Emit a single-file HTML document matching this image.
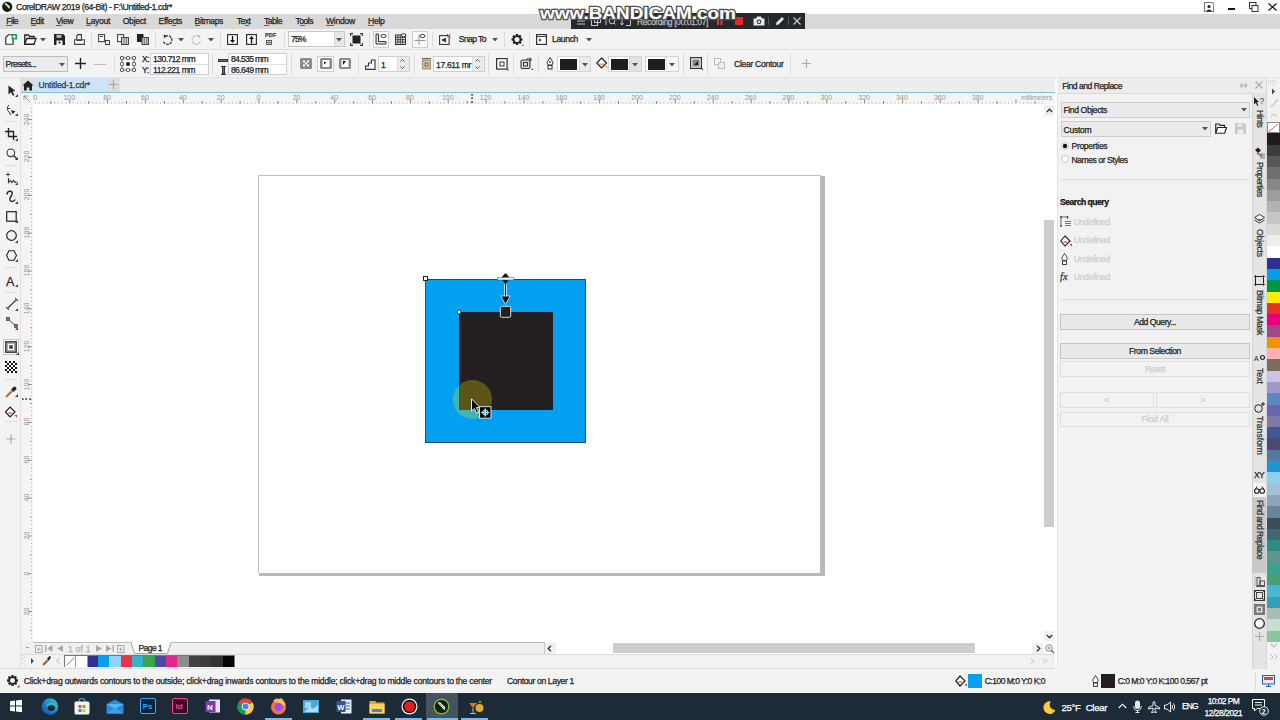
<!DOCTYPE html>
<html><head><meta charset="utf-8">
<style>
*{margin:0;padding:0;box-sizing:border-box}
html,body{width:1280px;height:720px;overflow:hidden;background:#f2f2f2;font-family:"Liberation Sans",sans-serif;color:#222;position:relative}
.a{position:absolute}
.t{position:absolute;white-space:nowrap;line-height:1;-webkit-text-stroke:0.25px currentColor}
svg{overflow:visible}
</style></head><body>

<div class="a" style="left:0px;top:0px;width:1280px;height:14px;background:#ffffff;"></div>
<svg class="a" style="left:2px;top:1px;" width="12" height="12" viewBox="0 0 12 12"><circle cx="5.2" cy="5.8" r="5.1" fill="#0d1f08"/><path d="M2.2 2.6 L4.2 1.9 L8 5.6 L7.4 7.9 Z" fill="#e8f2e0"/><path d="M3.4 2.8 L7 6.2" stroke="#7a9a70" stroke-width="0.6"/></svg>
<div class="t" style="left:16px;top:2.95px;font-size:8.8px;color:#1a1a1a;letter-spacing:-0.426px;">CorelDRAW 2019 (64-Bit) - F:\Untitled-1.cdr*</div>
<svg class="a" style="left:1204px;top:2px;" width="11" height="10" viewBox="0 0 11 10"><rect x="0.5" y="0.5" width="9" height="9" fill="#fff" stroke="#666" stroke-width="0.9"/><circle cx="5" cy="4.5" r="1.6" fill="#222"/><path d="M1.8 9.5 Q5 5.5 8.2 9.5Z" fill="#222"/><circle cx="9.5" cy="1.5" r="1.5" fill="#f0c090"/></svg>
<div class="a" style="left:1228px;top:8px;width:7px;height:1.8px;background:#111;"></div>
<svg class="a" style="left:1249px;top:2px;" width="10" height="10" viewBox="0 0 10 10"><rect x="0.5" y="0.5" width="6.5" height="6" fill="#fff" stroke="#222" stroke-width="0.9"/><rect x="3" y="3.5" width="6" height="6" fill="#fff" stroke="#222" stroke-width="0.9"/></svg>
<svg class="a" style="left:1268px;top:2.5px;" width="9" height="8" viewBox="0 0 9 8"><path d="M0.5 0.5 L8.5 7.5 M8.5 0.5 L0.5 7.5" stroke="#111" stroke-width="1.2"/></svg>
<div class="a" style="left:0px;top:14px;width:1280px;height:15px;background:#d9d9d9;"></div>
<div class="t" style="left:6.3px;top:17.12px;font-size:8.6px;color:#1e1e1e;letter-spacing:-0.539px;">File</div>
<div class="a" style="left:6.3px;top:25.1px;width:5.25px;height:0.9px;background:#666;"></div>
<div class="t" style="left:30.5px;top:17.12px;font-size:8.6px;color:#1e1e1e;letter-spacing:-0.405px;">Edit</div>
<div class="a" style="left:30.5px;top:25.1px;width:5.74px;height:0.9px;background:#666;"></div>
<div class="t" style="left:56px;top:17.12px;font-size:8.6px;color:#1e1e1e;letter-spacing:-0.271px;">View</div>
<div class="a" style="left:56.0px;top:25.1px;width:5.74px;height:0.9px;background:#666;"></div>
<div class="t" style="left:86px;top:17.12px;font-size:8.6px;color:#1e1e1e;letter-spacing:-0.303px;">Layout</div>
<div class="a" style="left:86.0px;top:25.1px;width:4.78px;height:0.9px;background:#666;"></div>
<div class="t" style="left:122.7px;top:17.12px;font-size:8.6px;color:#1e1e1e;letter-spacing:-0.259px;">Object</div>
<div class="t" style="left:158.6px;top:17.12px;font-size:8.6px;color:#1e1e1e;letter-spacing:-0.390px;">Effects</div>
<div class="a" style="left:172.18px;top:25.1px;width:4.3px;height:0.9px;background:#666;"></div>
<div class="t" style="left:194.6px;top:17.12px;font-size:8.6px;color:#1e1e1e;letter-spacing:-0.381px;">Bitmaps</div>
<div class="a" style="left:194.6px;top:25.1px;width:5.74px;height:0.9px;background:#666;"></div>
<div class="t" style="left:236.7px;top:17.12px;font-size:8.6px;color:#1e1e1e;letter-spacing:-0.518px;">Text</div>
<div class="a" style="left:244.75px;top:25.1px;width:4.3px;height:0.9px;background:#666;"></div>
<div class="t" style="left:264px;top:17.12px;font-size:8.6px;color:#1e1e1e;letter-spacing:-0.512px;">Table</div>
<div class="a" style="left:264.0px;top:25.1px;width:5.25px;height:0.9px;background:#666;"></div>
<div class="t" style="left:295.5px;top:17.12px;font-size:8.6px;color:#1e1e1e;letter-spacing:-0.515px;">Tools</div>
<div class="a" style="left:300.24px;top:25.1px;width:4.78px;height:0.9px;background:#666;"></div>
<div class="t" style="left:326px;top:17.12px;font-size:8.6px;color:#1e1e1e;letter-spacing:-0.264px;">Window</div>
<div class="a" style="left:326.0px;top:25.1px;width:8.12px;height:0.9px;background:#666;"></div>
<div class="t" style="left:368px;top:17.12px;font-size:8.6px;color:#1e1e1e;letter-spacing:-0.297px;">Help</div>
<div class="a" style="left:368.0px;top:25.1px;width:6.21px;height:0.9px;background:#666;"></div>
<div class="a" style="left:0px;top:29px;width:1280px;height:20px;background:#f3f3f3;"></div>
<div class="a" style="left:0px;top:49px;width:1280px;height:1px;background:#dedede;"></div>
<svg class="a" style="left:5px;top:34px;" width="13" height="11" viewBox="0 0 13 11"><path d="M0.75 3.5 L3.5 0.75 H8 V10.25 H0.75 Z" fill="#fff" stroke="#333" stroke-width="1.2"/><rect x="6.5" y="0" width="5.5" height="5.5" fill="#1aa04a"/><path d="M9.25 1 V4.5 M7.5 2.75 H11" stroke="#fff" stroke-width="1.1"/></svg>
<svg class="a" style="left:24px;top:34px;" width="13" height="11" viewBox="0 0 13 11"><path d="M0.75 10.25 V1 H4.5 L5.5 2.5 H10 V4" fill="none" stroke="#222" stroke-width="1.3"/><path d="M0.75 10.25 L2.8 4.5 H12 L10 10.25 Z" fill="#fff" stroke="#222" stroke-width="1.3"/></svg>
<svg class="a" style="left:40px;top:38px;" width="6" height="4" viewBox="0 0 6 4"><path d="M0 0 H6 L3 3.5Z" fill="#555"/></svg>
<svg class="a" style="left:54px;top:34px;" width="11" height="11" viewBox="0 0 11 11"><path d="M0 0 H9 L11 2 V11 H0Z" fill="#222"/><rect x="2.5" y="0.8" width="5" height="3" fill="#bbb"/><rect x="2.5" y="6.5" width="6" height="4.5" fill="#fff"/><rect x="4.5" y="7.5" width="2" height="2" fill="#222"/></svg>
<svg class="a" style="left:74px;top:34px;" width="12" height="11" viewBox="0 0 12 11"><path d="M2.8 6.2 V2 L4 0.6 H7.4 V6.2" fill="#fff" stroke="#333" stroke-width="1.1"/><path d="M0.6 5.7 H10.4 V10.4 H0.6Z" fill="#fff" stroke="#444" stroke-width="1.1"/><path d="M2.5 6.4 H8" stroke="#444" stroke-width="1.2"/></svg>
<div class="a" style="left:91px;top:32px;width:1px;height:15px;background:#dcdcdc;"></div>
<svg class="a" style="left:98px;top:34px;" width="12" height="11" viewBox="0 0 12 11"><rect x="0.6" y="0.6" width="6" height="7" fill="#fff" stroke="#444" stroke-width="1.1"/><path d="M2 2.5 H5" stroke="#444"/><rect x="7.5" y="6.5" width="4" height="4" fill="#eee" stroke="#444"/></svg>
<svg class="a" style="left:117px;top:34px;" width="12" height="11" viewBox="0 0 12 11"><rect x="0.6" y="0.6" width="6" height="7" fill="#fff" stroke="#444" stroke-width="1.1"/><rect x="4.5" y="3.5" width="7" height="7" fill="#ccc" stroke="#444"/><path d="M7 4 V10 M9.3 4 V10" stroke="#777"/></svg>
<svg class="a" style="left:137px;top:34px;" width="12" height="11" viewBox="0 0 12 11"><rect x="0" y="0" width="6.5" height="8" fill="#222"/><rect x="5" y="3.5" width="6.5" height="7" fill="#ccc" stroke="#444"/><path d="M7.3 4 V10 M9.6 4 V10" stroke="#777"/></svg>
<div class="a" style="left:155px;top:32px;width:1px;height:15px;background:#dcdcdc;"></div>
<svg class="a" style="left:162px;top:34px;" width="11" height="11" viewBox="0 0 11 11"><path d="M3.5 2.2 A4.3 4.3 0 1 1 1.5 7.5" fill="none" stroke="#333" stroke-width="1.3" stroke-dasharray="2.5 1"/><path d="M1.5 0.5 L4.8 2 L2.2 4.2Z" fill="#333"/></svg>
<svg class="a" style="left:178px;top:38px;" width="6" height="4" viewBox="0 0 6 4"><path d="M0 0 H6 L3 3.5Z" fill="#555"/></svg>
<svg class="a" style="left:191px;top:34px;" width="11" height="11" viewBox="0 0 11 11"><path d="M7.5 2.2 A4.3 4.3 0 1 0 9.5 7.5" fill="none" stroke="#bbb" stroke-width="1.3" stroke-dasharray="2.5 1"/><path d="M9.5 0.5 L6.2 2 L8.8 4.2Z" fill="#bbb"/></svg>
<svg class="a" style="left:208px;top:38px;" width="6" height="4" viewBox="0 0 6 4"><path d="M0 0 H6 L3 3.5Z" fill="#555"/></svg>
<div class="a" style="left:220px;top:32px;width:1px;height:15px;background:#dcdcdc;"></div>
<svg class="a" style="left:227px;top:34px;" width="11" height="11" viewBox="0 0 11 11"><rect x="0.6" y="0.6" width="9.8" height="9.8" fill="#fff" stroke="#333" stroke-width="1.2"/><path d="M5.5 2 V8" stroke="#111" stroke-width="1.4"/><path d="M3 6 L5.5 9 L8 6Z" fill="#111"/></svg>
<svg class="a" style="left:246px;top:34px;" width="11" height="11" viewBox="0 0 11 11"><rect x="0.6" y="0.6" width="9.8" height="9.8" fill="#fff" stroke="#333" stroke-width="1.2"/><path d="M5.5 3 V9.5" stroke="#111" stroke-width="1.4"/><path d="M3 5 L5.5 2 L8 5Z" fill="#111"/></svg>
<div class="t" style="left:265px;top:33px;font-size:5.5px;font-weight:bold;color:#444;letter-spacing:0.1px">PDF</div>
<svg class="a" style="left:266px;top:40px;" width="6" height="5" viewBox="0 0 6 5"><rect x="0.5" y="0.5" width="5" height="4" fill="none" stroke="#555"/><path d="M3 1 V4 M1 2.5 H5" stroke="#555" stroke-width="0.8"/></svg>
<div class="a" style="left:284px;top:32px;width:1px;height:15px;background:#dcdcdc;"></div>
<div class="a" style="left:288px;top:31px;width:57px;height:16px;background:#fff;border:1px solid #c9c9c9"></div>
<div class="a" style="left:334px;top:32px;width:10px;height:14px;background:#e6e6e6;border-left:1px solid #d6d6d6"></div>
<svg class="a" style="left:336px;top:38px;" width="6" height="4" viewBox="0 0 6 4"><path d="M0 0 H6 L3 3.5Z" fill="#555"/></svg>
<div class="t" style="left:291px;top:35.32px;font-size:8.6px;color:#222;letter-spacing:-0.871px;">75%</div>
<svg class="a" style="left:350px;top:33px;" width="13" height="13" viewBox="0 0 13 13"><path d="M0.6 3 V0.6 H3 M10 0.6 H12.4 V3 M12.4 10 V12.4 H10 M3 12.4 H0.6 V10" fill="none" stroke="#333" stroke-width="1.1"/><rect x="2.5" y="2.5" width="8" height="8" fill="#222"/></svg>
<div class="a" style="left:369px;top:32px;width:1px;height:15px;background:#dcdcdc;"></div>
<div class="a" style="left:373px;top:31px;width:16px;height:17px;background:#fafafa;border:1px solid #cfcfcf"></div>
<svg class="a" style="left:375px;top:33px;" width="12" height="12" viewBox="0 0 12 12"><path d="M1 1 V11 H11 V8.5 H3.5 V1Z" fill="#ddd" stroke="#333" stroke-width="1"/><ellipse cx="8.5" cy="3" rx="2.6" ry="1.6" fill="#fff" stroke="#333"/></svg>
<svg class="a" style="left:395px;top:33px;" width="12" height="12" viewBox="0 0 12 12"><rect x="0.5" y="2" width="10" height="9.5" fill="none" stroke="#333"/><path d="M0.5 4.3 H10.5 M0.5 6.7 H10.5 M0.5 9 H10.5 M2.9 2 V11.5 M5.3 2 V11.5 M7.7 2 V11.5" stroke="#333" stroke-width="0.9"/><ellipse cx="8.5" cy="2.2" rx="2.4" ry="1.5" fill="#fff" stroke="#333"/></svg>
<div class="a" style="left:412px;top:31px;width:16px;height:17px;background:#fafafa;border:1px solid #cfcfcf"></div>
<svg class="a" style="left:414px;top:33px;" width="12" height="12" viewBox="0 0 12 12"><path d="M5 2 V12 M0.5 7.5 H11.5" stroke="#999" stroke-width="1"/><ellipse cx="8.5" cy="3" rx="2.6" ry="1.6" fill="#fff" stroke="#333"/></svg>
<div class="a" style="left:432px;top:32px;width:1px;height:15px;background:#dcdcdc;"></div>
<svg class="a" style="left:439px;top:34px;" width="12" height="11" viewBox="0 0 12 11"><rect x="0.6" y="1.6" width="9.5" height="8.8" fill="#fff" stroke="#333" stroke-width="1.1"/><path d="M2 6 L7 3.5 V8.5Z" fill="#333"/><path d="M8 0 L11.5 3.5 M11.5 0 L8 3.5" stroke="#d33" stroke-width="1"/></svg>
<div class="t" style="left:458.8px;top:35.32px;font-size:8.6px;color:#222;letter-spacing:-0.600px;">Snap To</div>
<svg class="a" style="left:492px;top:38px;" width="6" height="4" viewBox="0 0 6 4"><path d="M0 0 H6 L3 3.5Z" fill="#555"/></svg>
<div class="a" style="left:504px;top:32px;width:1px;height:15px;background:#dcdcdc;"></div>
<svg class="a" style="left:511px;top:34px;" width="13" height="13" viewBox="0 0 13 13"><g transform="translate(6 5.5)"><path d="M-1 -5.5 H1 L1.4 -3.8 L3 -4.7 L4.4 -3.3 L3.6 -1.6 L5.5 -1 V1 L3.8 1.4 L4.7 3 L3.3 4.4 L1.6 3.6 L1 5.5 H-1 L-1.4 3.8 L-3 4.7 L-4.4 3.3 L-3.6 1.6 L-5.5 1 V-1 L-3.8 -1.4 L-4.7 -3 L-3.3 -4.4 L-1.6 -3.6Z" fill="#222"/><circle r="2.5" fill="#f3f3f3"/></g><path d="M10.5 12 L12.5 10 V12Z" fill="#555"/></svg>
<div class="a" style="left:529px;top:32px;width:1px;height:15px;background:#dcdcdc;"></div>
<svg class="a" style="left:536px;top:34px;" width="11" height="11" viewBox="0 0 11 11"><rect x="0.6" y="0.6" width="9.8" height="9.8" fill="#fff" stroke="#333" stroke-width="1.2"/><path d="M0.6 2.6 H10.4" stroke="#333"/><path d="M3 4.5 L6 6 L3 7.5Z" fill="#333"/></svg>
<div class="t" style="left:552px;top:35.32px;font-size:8.6px;color:#222;letter-spacing:-0.369px;">Launch</div>
<svg class="a" style="left:586px;top:38px;" width="6" height="4" viewBox="0 0 6 4"><path d="M0 0 H6 L3 3.5Z" fill="#555"/></svg>
<div class="a" style="left:0px;top:50px;width:1280px;height:28px;background:#f3f3f3;"></div>
<div class="a" style="left:0px;top:77px;width:1280px;height:1px;background:#e4e4e4;"></div>
<div class="a" style="left:3px;top:56px;width:65px;height:16px;background:#ebebeb;border:1px solid #bdbdbd"></div>
<div class="t" style="left:5.6px;top:60.32px;font-size:8.6px;color:#222;letter-spacing:-0.592px;">Presets...</div>
<svg class="a" style="left:59px;top:63px;" width="6" height="4" viewBox="0 0 6 4"><path d="M0 0 H6 L3 3.5Z" fill="#555"/></svg>
<svg class="a" style="left:75px;top:58px;" width="11" height="11" viewBox="0 0 11 11"><path d="M5.5 0 V11 M0 5.5 H11" stroke="#222" stroke-width="1.4"/></svg>
<div class="a" style="left:94px;top:64px;width:12px;height:1.4px;background:#bdbdbd;"></div>
<div class="a" style="left:114px;top:54px;width:1px;height:20px;background:#dcdcdc;"></div>
<svg class="a" style="left:120px;top:56px;" width="16" height="16" viewBox="0 0 16 16"><path d="M2 2 H14 V14 H2Z" fill="none" stroke="#555" stroke-width="0.8"/><rect x="0.5" y="0.5" width="3" height="3" rx="0.8" fill="#fff" stroke="#333" stroke-width="0.9"/><rect x="0.5" y="6.5" width="3" height="3" rx="0.8" fill="#fff" stroke="#333" stroke-width="0.9"/><rect x="0.5" y="12.5" width="3" height="3" rx="0.8" fill="#fff" stroke="#333" stroke-width="0.9"/><rect x="6.5" y="0.5" width="3" height="3" rx="0.8" fill="#fff" stroke="#333" stroke-width="0.9"/><rect x="6.5" y="12.5" width="3" height="3" rx="0.8" fill="#fff" stroke="#333" stroke-width="0.9"/><rect x="12.5" y="0.5" width="3" height="3" rx="0.8" fill="#fff" stroke="#333" stroke-width="0.9"/><rect x="12.5" y="6.5" width="3" height="3" rx="0.8" fill="#fff" stroke="#333" stroke-width="0.9"/><rect x="12.5" y="12.5" width="3" height="3" rx="0.8" fill="#fff" stroke="#333" stroke-width="0.9"/><rect x="6.3" y="6.3" width="3.4" height="3.4" fill="#111"/></svg>
<div class="t" style="left:142px;top:55.12px;font-size:8.6px;color:#222;letter-spacing:-0.563px;">X:</div>
<div class="t" style="left:142px;top:65.72px;font-size:8.6px;color:#222;letter-spacing:-0.326px;">Y:</div>
<div class="a" style="left:150px;top:53px;width:59px;height:22px;background:#fff;border:1px solid #cfcfcf"></div>
<div class="a" style="left:151px;top:64px;width:57px;height:1px;background:#e0e0e0;"></div>
<div class="t" style="left:153px;top:55.12px;font-size:8.6px;color:#222;letter-spacing:-0.580px;">130.712 mm</div>
<div class="t" style="left:153px;top:65.72px;font-size:8.6px;color:#222;letter-spacing:-0.516px;">112.221 mm</div>
<div class="a" style="left:212px;top:54px;width:1px;height:20px;background:#dcdcdc;"></div>
<svg class="a" style="left:218px;top:58px;" width="10" height="5" viewBox="0 0 10 5"><rect x="0" y="1" width="10" height="3" fill="#333"/><path d="M1.5 2.5 H8.5" stroke="#fff" stroke-width="0.6" stroke-dasharray="1 1"/></svg>
<svg class="a" style="left:221px;top:66px;" width="5" height="9" viewBox="0 0 5 9"><rect x="1" y="0" width="3" height="9" fill="#333"/><path d="M0 0.5 H5 M0 8.5 H5" stroke="#333" stroke-width="1"/><path d="M2.5 1.5 V7.5" stroke="#fff" stroke-width="0.6" stroke-dasharray="1 1"/></svg>
<div class="a" style="left:228px;top:53px;width:59px;height:22px;background:#fff;border:1px solid #cfcfcf"></div>
<div class="a" style="left:229px;top:64px;width:57px;height:1px;background:#e0e0e0;"></div>
<div class="t" style="left:231px;top:55.12px;font-size:8.6px;color:#222;letter-spacing:-0.669px;">84.535 mm</div>
<div class="t" style="left:231px;top:65.72px;font-size:8.6px;color:#222;letter-spacing:-0.669px;">86.649 mm</div>
<div class="a" style="left:291px;top:54px;width:1px;height:20px;background:#dcdcdc;"></div>
<svg class="a" style="left:300px;top:58px;" width="12" height="11" viewBox="0 0 12 11"><rect x="0" y="0" width="12" height="11" rx="1.5" fill="#8a8a8a"/><g fill="#fff"><rect x="3" y="2.5" width="2" height="2"/><rect x="7" y="2.5" width="2" height="2"/><rect x="5" y="4.5" width="2" height="2"/><rect x="3" y="6.5" width="2" height="2"/><rect x="7" y="6.5" width="2" height="2"/></g></svg>
<div class="a" style="left:317px;top:56px;width:17px;height:16px;background:#fbfbfb;border:1px solid #cfcfcf"></div>
<svg class="a" style="left:320px;top:58px;" width="12" height="11" viewBox="0 0 12 11"><rect x="0" y="0" width="12" height="11" rx="1.5" fill="#8a8a8a"/><rect x="2.5" y="2" width="7" height="7" fill="#fff"/><path d="M4 4 L6.5 4 L4 6.5Z" fill="#111"/></svg>
<svg class="a" style="left:339px;top:58px;" width="12" height="11" viewBox="0 0 12 11"><rect x="0" y="0" width="12" height="11" rx="1.5" fill="#8a8a8a"/><rect x="2.5" y="2" width="7" height="7" fill="#fff"/><path d="M4 3 L7 3 L4 7Z" fill="#111"/></svg>
<div class="a" style="left:358px;top:54px;width:1px;height:20px;background:#dcdcdc;"></div>
<svg class="a" style="left:365px;top:58px;" width="12" height="12" viewBox="0 0 12 12"><path d="M0.6 11.4 V8 H3.5 V5 H6.5 V2 H10 V11.4Z" fill="#fff" stroke="#333" stroke-width="1.1"/></svg>
<div class="a" style="left:378px;top:56px;width:32px;height:16px;background:#fff;border:1px solid #cfcfcf"></div>
<div class="a" style="left:397px;top:57px;width:12px;height:14px;background:#eaeaea;border-left:1px solid #dcdcdc"></div>
<svg class="a" style="left:400px;top:59px;" width="5" height="10" viewBox="0 0 5 10"><path d="M0.5 2.5 L2.5 0.5 L4.5 2.5 M0.5 7.5 L2.5 9.5 L4.5 7.5" fill="none" stroke="#555"/></svg>
<div class="t" style="left:381px;top:60.82px;font-size:8.6px;color:#222;">1</div>
<div class="a" style="left:414px;top:54px;width:1px;height:20px;background:#dcdcdc;"></div>
<svg class="a" style="left:422px;top:58px;" width="9" height="11" viewBox="0 0 9 11"><rect x="0" y="0" width="9" height="1.2" fill="#666"/><rect x="0.5" y="2" width="8" height="9" fill="#d9b88a" stroke="#777" stroke-width="0.7"/><rect x="3" y="5" width="3" height="3" fill="none" stroke="#666" stroke-width="0.8"/></svg>
<div class="a" style="left:433px;top:56px;width:52px;height:16px;background:#fff;border:1px solid #cfcfcf"></div>
<div class="a" style="left:472px;top:57px;width:12px;height:14px;background:#eaeaea;border-left:1px solid #dcdcdc"></div>
<svg class="a" style="left:475px;top:59px;" width="5" height="10" viewBox="0 0 5 10"><path d="M0.5 2.5 L2.5 0.5 L4.5 2.5 M0.5 7.5 L2.5 9.5 L4.5 7.5" fill="none" stroke="#555"/></svg>
<div class="t" style="left:436px;top:60.82px;font-size:8.6px;color:#222;letter-spacing:-0.342px;">17.611 mr</div>
<div class="a" style="left:488px;top:54px;width:1px;height:20px;background:#dcdcdc;"></div>
<svg class="a" style="left:496px;top:58px;" width="13" height="13" viewBox="0 0 13 13"><rect x="0.6" y="0.6" width="10.5" height="10.5" fill="#fff" stroke="#333" stroke-width="1.2"/><rect x="4" y="4" width="4" height="4" fill="none" stroke="#333"/><path d="M10.5 12.5 L12.5 10.5 V12.5Z" fill="#555"/></svg>
<div class="a" style="left:513px;top:54px;width:1px;height:20px;background:#dcdcdc;"></div>
<svg class="a" style="left:520px;top:57px;" width="14" height="14" viewBox="0 0 14 14"><rect x="1" y="3" width="9" height="8.5" rx="1.5" fill="#ddd" stroke="#333" stroke-width="1.1"/><rect x="3.5" y="5.5" width="4" height="3.5" fill="none" stroke="#333"/><path d="M6 2.5 Q9 0 11 3 M10 0.5 L11.5 3 L9 3.2" fill="none" stroke="#333" stroke-width="0.9"/><path d="M11 13 L13 11 V13Z" fill="#555"/></svg>
<div class="a" style="left:538px;top:54px;width:1px;height:20px;background:#dcdcdc;"></div>
<svg class="a" style="left:546px;top:57px;" width="8" height="13" viewBox="0 0 8 13"><path d="M4 0.5 L7 5.5 L6 8 H2 L1 5.5Z" fill="#fff" stroke="#333" stroke-width="1"/><rect x="2" y="8.5" width="4" height="3.5" fill="#fff" stroke="#333"/><circle cx="4" cy="5" r="0.9" fill="#333"/></svg>
<div class="a" style="left:557px;top:56px;width:34px;height:16px;background:#fff;border:1px solid #d6d6d6"></div>
<div class="a" style="left:560px;top:58.5px;width:17px;height:11px;background:#1e1e1e;"></div>
<div class="a" style="left:579px;top:57px;width:11px;height:14px;background:#eaeaea;border-left:1px solid #dcdcdc"></div>
<svg class="a" style="left:582px;top:63px;" width="6" height="4" viewBox="0 0 6 4"><path d="M0 0 H6 L3 3.5Z" fill="#555"/></svg>
<svg class="a" style="left:596px;top:57px;" width="12" height="13" viewBox="0 0 12 13"><path d="M5.5 1 L10.5 6 L5.5 11 L0.8 6Z" fill="#fff" stroke="#222" stroke-width="1.2"/><path d="M2.5 6.5 Q5.5 9.5 8.5 6.5" fill="#e7a35a"/><path d="M9 9 L11.5 11.5 V9Z" fill="#e7a35a"/></svg>
<div class="a" style="left:608px;top:56px;width:34px;height:16px;background:#fff;border:1px solid #d6d6d6"></div>
<div class="a" style="left:611px;top:58.5px;width:17px;height:11px;background:#1e1e1e;"></div>
<div class="a" style="left:629px;top:57px;width:12px;height:14px;background:#e2e2e2;border-left:1px solid #d0d0d0"></div>
<svg class="a" style="left:632px;top:63px;" width="6" height="4" viewBox="0 0 6 4"><path d="M0 0 H6 L3 3.5Z" fill="#555"/></svg>
<div class="a" style="left:645px;top:56px;width:34px;height:16px;background:#fff;border:1px solid #d6d6d6"></div>
<div class="a" style="left:647.5px;top:58.5px;width:17px;height:11px;background:#1e1e1e;"></div>
<div class="a" style="left:666px;top:57px;width:12px;height:14px;background:#f7f7f7;border-left:1px solid #e4e4e4"></div>
<svg class="a" style="left:669px;top:63px;" width="6" height="4" viewBox="0 0 6 4"><path d="M0 0 H6 L3 3.5Z" fill="#555"/></svg>
<div class="a" style="left:683px;top:54px;width:1px;height:20px;background:#dcdcdc;"></div>
<svg class="a" style="left:690px;top:57px;" width="13" height="13" viewBox="0 0 13 13"><rect x="0.6" y="0.6" width="10.8" height="10.8" fill="#eee" stroke="#333" stroke-width="1.2"/><rect x="2.5" y="2.5" width="7" height="7" fill="#888"/><path d="M4 8 L8 4 V8Z" fill="#222"/><path d="M11 13 L13 11 V13Z" fill="#555"/></svg>
<div class="a" style="left:707px;top:54px;width:1px;height:20px;background:#dcdcdc;"></div>
<svg class="a" style="left:714px;top:58px;" width="11" height="11" viewBox="0 0 11 11"><rect x="0.5" y="0.5" width="6" height="6" fill="#f5f5f5" stroke="#bbb"/><rect x="4.5" y="4.5" width="6" height="6" fill="#eee" stroke="#bbb"/></svg>
<div class="t" style="left:734px;top:60.32px;font-size:8.6px;color:#222;letter-spacing:-0.310px;">Clear Contour</div>
<div class="a" style="left:790px;top:54px;width:1px;height:20px;background:#dcdcdc;"></div>
<svg class="a" style="left:802px;top:59px;" width="9" height="9" viewBox="0 0 9 9"><path d="M4.5 0 V9 M0 4.5 H9" stroke="#aaa" stroke-width="1.2"/></svg>
<div class="a" style="left:21px;top:78px;width:1035px;height:15px;background:#ededed;"></div>
<div class="a" style="left:21px;top:78px;width:13px;height:14px;background:#dedede;"></div>
<svg class="a" style="left:22px;top:80px;" width="12" height="11" viewBox="0 0 12 11"><path d="M6 0.5 L11.5 5.5 H10 V10.5 H7.3 V7.5 H4.7 V10.5 H2 V5.5 H0.5Z" fill="#222"/></svg>
<div class="a" style="left:34px;top:78px;width:73px;height:14px;background:#cfe3f8;"></div>
<div class="t" style="left:38.5px;top:81.12px;font-size:8.6px;color:#2a3a55;letter-spacing:-0.199px;">Untitled-1.cdr*</div>
<div class="a" style="left:107px;top:78px;width:13px;height:14px;background:#dcdcdc;"></div>
<svg class="a" style="left:109px;top:80px;" width="9" height="9" viewBox="0 0 9 9"><path d="M4.5 0 V9 M0 4.5 H9" stroke="#aaa" stroke-width="1.2"/></svg>
<div class="a" style="left:21px;top:92px;width:1035px;height:1.5px;background:#7ec3d3;"></div>
<div class="a" style="left:0px;top:78px;width:21px;height:591px;background:#f3f3f3;"></div>
<div class="a" style="left:20px;top:78px;width:1px;height:591px;background:#e2e2e2;"></div>
<svg class="a" style="left:8px;top:85px;" width="9" height="11" viewBox="0 0 9 11"><path d="M0.5 0.5 L7.5 6 L4.5 6.5 L6.5 10 L5 10.8 L3 7.3 L0.5 9.5Z" fill="#222"/></svg>
<svg class="a" style="left:15px;top:94px;" width="3" height="3" viewBox="0 0 3 3"><path d="M0 3 L3 0 V3Z" fill="#444"/></svg>
<svg class="a" style="left:6px;top:104px;" width="12" height="12" viewBox="0 0 12 12"><path d="M3 1 Q-0.5 4.5 3 8 L5 11" fill="none" stroke="#333" stroke-width="1"/><path d="M2 4.5 H4" stroke="#333"/><path d="M5 6 L9.5 7.5 L6.5 10Z" fill="#222"/></svg>
<svg class="a" style="left:15px;top:113px;" width="3" height="3" viewBox="0 0 3 3"><path d="M0 3 L3 0 V3Z" fill="#444"/></svg>
<div class="a" style="left:5px;top:121px;width:12px;height:1px;background:#dcdcdc;"></div>
<svg class="a" style="left:5px;top:128px;" width="12" height="12" viewBox="0 0 12 12"><path d="M3.5 0 V8.5 H12 M0 3.5 H8.5 V12" fill="none" stroke="#222" stroke-width="1.4"/></svg>
<svg class="a" style="left:15px;top:138px;" width="3" height="3" viewBox="0 0 3 3"><path d="M0 3 L3 0 V3Z" fill="#444"/></svg>
<svg class="a" style="left:6px;top:148px;" width="12" height="12" viewBox="0 0 12 12"><circle cx="4.8" cy="4.8" r="3.8" fill="none" stroke="#333" stroke-width="1.1"/><path d="M7.5 7.5 L11 11" stroke="#333" stroke-width="1.4"/></svg>
<svg class="a" style="left:15px;top:157px;" width="3" height="3" viewBox="0 0 3 3"><path d="M0 3 L3 0 V3Z" fill="#444"/></svg>
<div class="a" style="left:5px;top:165px;width:12px;height:1px;background:#dcdcdc;"></div>
<svg class="a" style="left:6px;top:172px;" width="12" height="12" viewBox="0 0 12 12"><path d="M2 0.5 V4.5 M0 2.5 H4" stroke="#333" stroke-width="0.9"/><path d="M2.5 6 V10.5 L4.2 8.5 L5.8 10.5 L7.4 8.5 L9 10.5 L10.5 9.5" fill="none" stroke="#333" stroke-width="1.1"/></svg>
<svg class="a" style="left:15px;top:182px;" width="3" height="3" viewBox="0 0 3 3"><path d="M0 3 L3 0 V3Z" fill="#444"/></svg>
<svg class="a" style="left:5px;top:190px;" width="12" height="13" viewBox="0 0 12 13"><path d="M1.8 4.5 Q2.5 0.8 5.5 1.2 Q8.5 2 6.5 5.5 Q3.5 9.5 6 11.2 Q8.5 12.2 10.2 9.5" fill="none" stroke="#222" stroke-width="1.4"/></svg>
<svg class="a" style="left:15px;top:201px;" width="3" height="3" viewBox="0 0 3 3"><path d="M0 3 L3 0 V3Z" fill="#444"/></svg>
<svg class="a" style="left:6px;top:211px;" width="12" height="12" viewBox="0 0 12 12"><rect x="0.7" y="0.7" width="9.5" height="9.5" fill="none" stroke="#222" stroke-width="1.2"/></svg>
<svg class="a" style="left:15px;top:220px;" width="3" height="3" viewBox="0 0 3 3"><path d="M0 3 L3 0 V3Z" fill="#444"/></svg>
<svg class="a" style="left:6px;top:230px;" width="12" height="12" viewBox="0 0 12 12"><circle cx="5.5" cy="5.5" r="4.8" fill="none" stroke="#222" stroke-width="1.2"/></svg>
<svg class="a" style="left:15px;top:240px;" width="3" height="3" viewBox="0 0 3 3"><path d="M0 3 L3 0 V3Z" fill="#444"/></svg>
<svg class="a" style="left:6px;top:250px;" width="12" height="12" viewBox="0 0 12 12"><path d="M3 0.8 H8 L10.5 5.5 L8 10.2 H3 L0.5 5.5Z" fill="none" stroke="#222" stroke-width="1.1"/></svg>
<svg class="a" style="left:15px;top:259px;" width="3" height="3" viewBox="0 0 3 3"><path d="M0 3 L3 0 V3Z" fill="#444"/></svg>
<div class="a" style="left:5px;top:267px;width:12px;height:1px;background:#dcdcdc;"></div>
<div class="t" style="left:6px;top:275.52px;font-size:12.5px;color:#222;">A</div>
<svg class="a" style="left:15px;top:284px;" width="3" height="3" viewBox="0 0 3 3"><path d="M0 3 L3 0 V3Z" fill="#444"/></svg>
<div class="a" style="left:5px;top:292px;width:12px;height:1px;background:#dcdcdc;"></div>
<svg class="a" style="left:6px;top:298px;" width="12" height="12" viewBox="0 0 12 12"><path d="M1 11 L11 1" stroke="#333" stroke-width="1.1"/><path d="M0 9 L3 12 M9 0 L12 3" stroke="#333"/></svg>
<svg class="a" style="left:15px;top:308px;" width="3" height="3" viewBox="0 0 3 3"><path d="M0 3 L3 0 V3Z" fill="#444"/></svg>
<svg class="a" style="left:6px;top:317px;" width="12" height="12" viewBox="0 0 12 12"><path d="M2 2 L10 9" stroke="#444" stroke-width="1"/><rect x="0.5" y="0.5" width="3" height="3" fill="#b6603a" stroke="#333" stroke-width="0.6"/><rect x="8.5" y="7.5" width="3" height="3" fill="#b6603a" stroke="#333" stroke-width="0.6"/></svg>
<svg class="a" style="left:15px;top:327px;" width="3" height="3" viewBox="0 0 3 3"><path d="M0 3 L3 0 V3Z" fill="#444"/></svg>
<div class="a" style="left:3px;top:339px;width:16px;height:16px;background:#fbfbfb;border:1px solid #c5c5c5"></div>
<svg class="a" style="left:5px;top:341px;" width="12" height="12" viewBox="0 0 12 12"><rect x="0" y="0" width="12" height="12" fill="#444"/><rect x="1.5" y="1.5" width="9" height="9" fill="#aaa"/><rect x="3" y="3" width="6" height="6" fill="#fff"/><rect x="4.2" y="4.2" width="3.6" height="3.6" fill="#444"/></svg>
<svg class="a" style="left:16px;top:352px;" width="3" height="3" viewBox="0 0 3 3"><path d="M0 3 L3 0 V3Z" fill="#444"/></svg>
<svg class="a" style="left:5px;top:361px;" width="12" height="12" viewBox="0 0 12 12"><rect x="0" y="0" width="2" height="2" fill="#111"/><rect x="0" y="2" width="2" height="2" fill="#fff"/><rect x="0" y="4" width="2" height="2" fill="#111"/><rect x="0" y="6" width="2" height="2" fill="#fff"/><rect x="0" y="8" width="2" height="2" fill="#111"/><rect x="0" y="10" width="2" height="2" fill="#fff"/><rect x="2" y="0" width="2" height="2" fill="#fff"/><rect x="2" y="2" width="2" height="2" fill="#111"/><rect x="2" y="4" width="2" height="2" fill="#fff"/><rect x="2" y="6" width="2" height="2" fill="#111"/><rect x="2" y="8" width="2" height="2" fill="#fff"/><rect x="2" y="10" width="2" height="2" fill="#111"/><rect x="4" y="0" width="2" height="2" fill="#111"/><rect x="4" y="2" width="2" height="2" fill="#fff"/><rect x="4" y="4" width="2" height="2" fill="#111"/><rect x="4" y="6" width="2" height="2" fill="#fff"/><rect x="4" y="8" width="2" height="2" fill="#111"/><rect x="4" y="10" width="2" height="2" fill="#fff"/><rect x="6" y="0" width="2" height="2" fill="#fff"/><rect x="6" y="2" width="2" height="2" fill="#111"/><rect x="6" y="4" width="2" height="2" fill="#fff"/><rect x="6" y="6" width="2" height="2" fill="#111"/><rect x="6" y="8" width="2" height="2" fill="#fff"/><rect x="6" y="10" width="2" height="2" fill="#111"/><rect x="8" y="0" width="2" height="2" fill="#111"/><rect x="8" y="2" width="2" height="2" fill="#fff"/><rect x="8" y="4" width="2" height="2" fill="#111"/><rect x="8" y="6" width="2" height="2" fill="#fff"/><rect x="8" y="8" width="2" height="2" fill="#111"/><rect x="8" y="10" width="2" height="2" fill="#fff"/><rect x="10" y="0" width="2" height="2" fill="#fff"/><rect x="10" y="2" width="2" height="2" fill="#111"/><rect x="10" y="4" width="2" height="2" fill="#fff"/><rect x="10" y="6" width="2" height="2" fill="#111"/><rect x="10" y="8" width="2" height="2" fill="#fff"/><rect x="10" y="10" width="2" height="2" fill="#111"/></svg>
<div class="a" style="left:5px;top:379px;width:12px;height:1px;background:#dcdcdc;"></div>
<svg class="a" style="left:5px;top:386px;" width="12" height="12" viewBox="0 0 12 12"><path d="M1 11 L7 5" stroke="#b36a30" stroke-width="2"/><path d="M6 3.5 L9 0.5 Q11.5 0.5 11.5 3 L8.5 6Z" fill="#222"/></svg>
<svg class="a" style="left:15px;top:394px;" width="3" height="3" viewBox="0 0 3 3"><path d="M0 3 L3 0 V3Z" fill="#444"/></svg>
<svg class="a" style="left:5px;top:406px;" width="13" height="12" viewBox="0 0 13 12"><path d="M5 1 L10 6 L5 11 L0.5 6Z" fill="#fff" stroke="#222" stroke-width="1.2"/><path d="M2.5 6.5 Q5 9 7.8 6.5" fill="#d03030"/><path d="M9.5 9 L12 11.5 V9Z" fill="#d03030"/></svg>
<div class="a" style="left:5px;top:421px;width:12px;height:1px;background:#dcdcdc;"></div>
<svg class="a" style="left:6px;top:434px;" width="10" height="10" viewBox="0 0 10 10"><path d="M5 0.5 V9.5 M0.5 5 H9.5" stroke="#aaa" stroke-width="1.2"/></svg>
<div class="a" style="left:21px;top:93px;width:1034px;height:11px;background:#f4f4f4;"></div>
<div class="a" style="left:21px;top:93px;width:12px;height:576px;background:#f4f4f4;"></div>
<svg class="a" style="left:23px;top:95px;" width="9" height="8" viewBox="0 0 9 8"><path d="M1 1 L7 7 M1 1 H5 M1 1 V5" stroke="#888" stroke-width="0.9" fill="none"/></svg>
<svg class="a" style="left:33px;top:93px;" width="1010" height="11" viewBox="0 0 1010 11"><rect x="2.19" y="9.5" width="1" height="1" fill="#aaa"/><rect x="5.97" y="9.5" width="1" height="1" fill="#aaa"/><rect x="9.75" y="9.5" width="1" height="1" fill="#aaa"/><rect x="13.54" y="9.5" width="1" height="1" fill="#aaa"/><rect x="17.32" y="8.5" width="1" height="2" fill="#555"/><rect x="21.11" y="9.5" width="1" height="1" fill="#aaa"/><rect x="24.89" y="9.5" width="1" height="1" fill="#aaa"/><rect x="28.68" y="9.5" width="1" height="1" fill="#aaa"/><rect x="32.47" y="9.5" width="1" height="1" fill="#aaa"/><rect x="36.25" y="6.5" width="1" height="4" fill="#8a8a8a"/><rect x="40.03" y="9.5" width="1" height="1" fill="#aaa"/><rect x="43.82" y="9.5" width="1" height="1" fill="#aaa"/><rect x="47.60" y="9.5" width="1" height="1" fill="#aaa"/><rect x="51.39" y="9.5" width="1" height="1" fill="#aaa"/><rect x="55.17" y="8.5" width="1" height="2" fill="#555"/><rect x="58.96" y="9.5" width="1" height="1" fill="#aaa"/><rect x="62.75" y="9.5" width="1" height="1" fill="#aaa"/><rect x="66.53" y="9.5" width="1" height="1" fill="#aaa"/><rect x="70.31" y="9.5" width="1" height="1" fill="#aaa"/><rect x="74.10" y="6.5" width="1" height="4" fill="#8a8a8a"/><rect x="77.88" y="9.5" width="1" height="1" fill="#aaa"/><rect x="81.67" y="9.5" width="1" height="1" fill="#aaa"/><rect x="85.45" y="9.5" width="1" height="1" fill="#aaa"/><rect x="89.24" y="9.5" width="1" height="1" fill="#aaa"/><rect x="93.03" y="8.5" width="1" height="2" fill="#555"/><rect x="96.81" y="9.5" width="1" height="1" fill="#aaa"/><rect x="100.59" y="9.5" width="1" height="1" fill="#aaa"/><rect x="104.38" y="9.5" width="1" height="1" fill="#aaa"/><rect x="108.16" y="9.5" width="1" height="1" fill="#aaa"/><rect x="111.95" y="6.5" width="1" height="4" fill="#8a8a8a"/><rect x="115.74" y="9.5" width="1" height="1" fill="#aaa"/><rect x="119.52" y="9.5" width="1" height="1" fill="#aaa"/><rect x="123.31" y="9.5" width="1" height="1" fill="#aaa"/><rect x="127.09" y="9.5" width="1" height="1" fill="#aaa"/><rect x="130.88" y="8.5" width="1" height="2" fill="#555"/><rect x="134.66" y="9.5" width="1" height="1" fill="#aaa"/><rect x="138.44" y="9.5" width="1" height="1" fill="#aaa"/><rect x="142.23" y="9.5" width="1" height="1" fill="#aaa"/><rect x="146.01" y="9.5" width="1" height="1" fill="#aaa"/><rect x="149.80" y="6.5" width="1" height="4" fill="#8a8a8a"/><rect x="153.58" y="9.5" width="1" height="1" fill="#aaa"/><rect x="157.37" y="9.5" width="1" height="1" fill="#aaa"/><rect x="161.16" y="9.5" width="1" height="1" fill="#aaa"/><rect x="164.94" y="9.5" width="1" height="1" fill="#aaa"/><rect x="168.72" y="8.5" width="1" height="2" fill="#555"/><rect x="172.51" y="9.5" width="1" height="1" fill="#aaa"/><rect x="176.30" y="9.5" width="1" height="1" fill="#aaa"/><rect x="180.08" y="9.5" width="1" height="1" fill="#aaa"/><rect x="183.87" y="9.5" width="1" height="1" fill="#aaa"/><rect x="187.65" y="6.5" width="1" height="4" fill="#8a8a8a"/><rect x="191.44" y="9.5" width="1" height="1" fill="#aaa"/><rect x="195.22" y="9.5" width="1" height="1" fill="#aaa"/><rect x="199.00" y="9.5" width="1" height="1" fill="#aaa"/><rect x="202.79" y="9.5" width="1" height="1" fill="#aaa"/><rect x="206.57" y="8.5" width="1" height="2" fill="#555"/><rect x="210.36" y="9.5" width="1" height="1" fill="#aaa"/><rect x="214.15" y="9.5" width="1" height="1" fill="#aaa"/><rect x="217.93" y="9.5" width="1" height="1" fill="#aaa"/><rect x="221.72" y="9.5" width="1" height="1" fill="#aaa"/><rect x="225.50" y="6.5" width="1" height="4" fill="#8a8a8a"/><rect x="229.29" y="9.5" width="1" height="1" fill="#aaa"/><rect x="233.07" y="9.5" width="1" height="1" fill="#aaa"/><rect x="236.86" y="9.5" width="1" height="1" fill="#aaa"/><rect x="240.64" y="9.5" width="1" height="1" fill="#aaa"/><rect x="244.43" y="8.5" width="1" height="2" fill="#555"/><rect x="248.21" y="9.5" width="1" height="1" fill="#aaa"/><rect x="252.00" y="9.5" width="1" height="1" fill="#aaa"/><rect x="255.78" y="9.5" width="1" height="1" fill="#aaa"/><rect x="259.56" y="9.5" width="1" height="1" fill="#aaa"/><rect x="263.35" y="6.5" width="1" height="4" fill="#8a8a8a"/><rect x="267.13" y="9.5" width="1" height="1" fill="#aaa"/><rect x="270.92" y="9.5" width="1" height="1" fill="#aaa"/><rect x="274.70" y="9.5" width="1" height="1" fill="#aaa"/><rect x="278.49" y="9.5" width="1" height="1" fill="#aaa"/><rect x="282.27" y="8.5" width="1" height="2" fill="#555"/><rect x="286.06" y="9.5" width="1" height="1" fill="#aaa"/><rect x="289.85" y="9.5" width="1" height="1" fill="#aaa"/><rect x="293.63" y="9.5" width="1" height="1" fill="#aaa"/><rect x="297.42" y="9.5" width="1" height="1" fill="#aaa"/><rect x="301.20" y="6.5" width="1" height="4" fill="#8a8a8a"/><rect x="304.99" y="9.5" width="1" height="1" fill="#aaa"/><rect x="308.77" y="9.5" width="1" height="1" fill="#aaa"/><rect x="312.56" y="9.5" width="1" height="1" fill="#aaa"/><rect x="316.34" y="9.5" width="1" height="1" fill="#aaa"/><rect x="320.12" y="8.5" width="1" height="2" fill="#555"/><rect x="323.91" y="9.5" width="1" height="1" fill="#aaa"/><rect x="327.69" y="9.5" width="1" height="1" fill="#aaa"/><rect x="331.48" y="9.5" width="1" height="1" fill="#aaa"/><rect x="335.26" y="9.5" width="1" height="1" fill="#aaa"/><rect x="339.05" y="6.5" width="1" height="4" fill="#8a8a8a"/><rect x="342.84" y="9.5" width="1" height="1" fill="#aaa"/><rect x="346.62" y="9.5" width="1" height="1" fill="#aaa"/><rect x="350.40" y="9.5" width="1" height="1" fill="#aaa"/><rect x="354.19" y="9.5" width="1" height="1" fill="#aaa"/><rect x="357.98" y="8.5" width="1" height="2" fill="#555"/><rect x="361.76" y="9.5" width="1" height="1" fill="#aaa"/><rect x="365.55" y="9.5" width="1" height="1" fill="#aaa"/><rect x="369.33" y="9.5" width="1" height="1" fill="#aaa"/><rect x="373.12" y="9.5" width="1" height="1" fill="#aaa"/><rect x="376.90" y="6.5" width="1" height="4" fill="#8a8a8a"/><rect x="380.69" y="9.5" width="1" height="1" fill="#aaa"/><rect x="384.47" y="9.5" width="1" height="1" fill="#aaa"/><rect x="388.25" y="9.5" width="1" height="1" fill="#aaa"/><rect x="392.04" y="9.5" width="1" height="1" fill="#aaa"/><rect x="395.83" y="8.5" width="1" height="2" fill="#555"/><rect x="399.61" y="9.5" width="1" height="1" fill="#aaa"/><rect x="403.39" y="9.5" width="1" height="1" fill="#aaa"/><rect x="407.18" y="9.5" width="1" height="1" fill="#aaa"/><rect x="410.97" y="9.5" width="1" height="1" fill="#aaa"/><rect x="414.75" y="6.5" width="1" height="4" fill="#8a8a8a"/><rect x="418.53" y="9.5" width="1" height="1" fill="#aaa"/><rect x="422.32" y="9.5" width="1" height="1" fill="#aaa"/><rect x="426.11" y="9.5" width="1" height="1" fill="#aaa"/><rect x="429.89" y="9.5" width="1" height="1" fill="#aaa"/><rect x="433.68" y="8.5" width="1" height="2" fill="#555"/><rect x="437.46" y="9.5" width="1" height="1" fill="#aaa"/><rect x="441.25" y="9.5" width="1" height="1" fill="#aaa"/><rect x="445.03" y="9.5" width="1" height="1" fill="#aaa"/><rect x="448.81" y="9.5" width="1" height="1" fill="#aaa"/><rect x="452.60" y="6.5" width="1" height="4" fill="#8a8a8a"/><rect x="456.38" y="9.5" width="1" height="1" fill="#aaa"/><rect x="460.17" y="9.5" width="1" height="1" fill="#aaa"/><rect x="463.96" y="9.5" width="1" height="1" fill="#aaa"/><rect x="467.74" y="9.5" width="1" height="1" fill="#aaa"/><rect x="471.52" y="8.5" width="1" height="2" fill="#555"/><rect x="475.31" y="9.5" width="1" height="1" fill="#aaa"/><rect x="479.10" y="9.5" width="1" height="1" fill="#aaa"/><rect x="482.88" y="9.5" width="1" height="1" fill="#aaa"/><rect x="486.66" y="9.5" width="1" height="1" fill="#aaa"/><rect x="490.45" y="6.5" width="1" height="4" fill="#8a8a8a"/><rect x="494.24" y="9.5" width="1" height="1" fill="#aaa"/><rect x="498.02" y="9.5" width="1" height="1" fill="#aaa"/><rect x="501.81" y="9.5" width="1" height="1" fill="#aaa"/><rect x="505.59" y="9.5" width="1" height="1" fill="#aaa"/><rect x="509.38" y="8.5" width="1" height="2" fill="#555"/><rect x="513.16" y="9.5" width="1" height="1" fill="#aaa"/><rect x="516.94" y="9.5" width="1" height="1" fill="#aaa"/><rect x="520.73" y="9.5" width="1" height="1" fill="#aaa"/><rect x="524.51" y="9.5" width="1" height="1" fill="#aaa"/><rect x="528.30" y="6.5" width="1" height="4" fill="#8a8a8a"/><rect x="532.09" y="9.5" width="1" height="1" fill="#aaa"/><rect x="535.87" y="9.5" width="1" height="1" fill="#aaa"/><rect x="539.65" y="9.5" width="1" height="1" fill="#aaa"/><rect x="543.44" y="9.5" width="1" height="1" fill="#aaa"/><rect x="547.23" y="8.5" width="1" height="2" fill="#555"/><rect x="551.01" y="9.5" width="1" height="1" fill="#aaa"/><rect x="554.80" y="9.5" width="1" height="1" fill="#aaa"/><rect x="558.58" y="9.5" width="1" height="1" fill="#aaa"/><rect x="562.37" y="9.5" width="1" height="1" fill="#aaa"/><rect x="566.15" y="6.5" width="1" height="4" fill="#8a8a8a"/><rect x="569.93" y="9.5" width="1" height="1" fill="#aaa"/><rect x="573.72" y="9.5" width="1" height="1" fill="#aaa"/><rect x="577.50" y="9.5" width="1" height="1" fill="#aaa"/><rect x="581.29" y="9.5" width="1" height="1" fill="#aaa"/><rect x="585.08" y="8.5" width="1" height="2" fill="#555"/><rect x="588.86" y="9.5" width="1" height="1" fill="#aaa"/><rect x="592.64" y="9.5" width="1" height="1" fill="#aaa"/><rect x="596.43" y="9.5" width="1" height="1" fill="#aaa"/><rect x="600.22" y="9.5" width="1" height="1" fill="#aaa"/><rect x="604.00" y="6.5" width="1" height="4" fill="#8a8a8a"/><rect x="607.79" y="9.5" width="1" height="1" fill="#aaa"/><rect x="611.57" y="9.5" width="1" height="1" fill="#aaa"/><rect x="615.36" y="9.5" width="1" height="1" fill="#aaa"/><rect x="619.14" y="9.5" width="1" height="1" fill="#aaa"/><rect x="622.92" y="8.5" width="1" height="2" fill="#555"/><rect x="626.71" y="9.5" width="1" height="1" fill="#aaa"/><rect x="630.50" y="9.5" width="1" height="1" fill="#aaa"/><rect x="634.28" y="9.5" width="1" height="1" fill="#aaa"/><rect x="638.07" y="9.5" width="1" height="1" fill="#aaa"/><rect x="641.85" y="6.5" width="1" height="4" fill="#8a8a8a"/><rect x="645.63" y="9.5" width="1" height="1" fill="#aaa"/><rect x="649.42" y="9.5" width="1" height="1" fill="#aaa"/><rect x="653.21" y="9.5" width="1" height="1" fill="#aaa"/><rect x="656.99" y="9.5" width="1" height="1" fill="#aaa"/><rect x="660.78" y="8.5" width="1" height="2" fill="#555"/><rect x="664.56" y="9.5" width="1" height="1" fill="#aaa"/><rect x="668.35" y="9.5" width="1" height="1" fill="#aaa"/><rect x="672.13" y="9.5" width="1" height="1" fill="#aaa"/><rect x="675.91" y="9.5" width="1" height="1" fill="#aaa"/><rect x="679.70" y="6.5" width="1" height="4" fill="#8a8a8a"/><rect x="683.49" y="9.5" width="1" height="1" fill="#aaa"/><rect x="687.27" y="9.5" width="1" height="1" fill="#aaa"/><rect x="691.06" y="9.5" width="1" height="1" fill="#aaa"/><rect x="694.84" y="9.5" width="1" height="1" fill="#aaa"/><rect x="698.62" y="8.5" width="1" height="2" fill="#555"/><rect x="702.41" y="9.5" width="1" height="1" fill="#aaa"/><rect x="706.19" y="9.5" width="1" height="1" fill="#aaa"/><rect x="709.98" y="9.5" width="1" height="1" fill="#aaa"/><rect x="713.77" y="9.5" width="1" height="1" fill="#aaa"/><rect x="717.55" y="6.5" width="1" height="4" fill="#8a8a8a"/><rect x="721.34" y="9.5" width="1" height="1" fill="#aaa"/><rect x="725.12" y="9.5" width="1" height="1" fill="#aaa"/><rect x="728.90" y="9.5" width="1" height="1" fill="#aaa"/><rect x="732.69" y="9.5" width="1" height="1" fill="#aaa"/><rect x="736.48" y="8.5" width="1" height="2" fill="#555"/><rect x="740.26" y="9.5" width="1" height="1" fill="#aaa"/><rect x="744.05" y="9.5" width="1" height="1" fill="#aaa"/><rect x="747.83" y="9.5" width="1" height="1" fill="#aaa"/><rect x="751.62" y="9.5" width="1" height="1" fill="#aaa"/><rect x="755.40" y="6.5" width="1" height="4" fill="#8a8a8a"/><rect x="759.19" y="9.5" width="1" height="1" fill="#aaa"/><rect x="762.97" y="9.5" width="1" height="1" fill="#aaa"/><rect x="766.75" y="9.5" width="1" height="1" fill="#aaa"/><rect x="770.54" y="9.5" width="1" height="1" fill="#aaa"/><rect x="774.33" y="8.5" width="1" height="2" fill="#555"/><rect x="778.11" y="9.5" width="1" height="1" fill="#aaa"/><rect x="781.89" y="9.5" width="1" height="1" fill="#aaa"/><rect x="785.68" y="9.5" width="1" height="1" fill="#aaa"/><rect x="789.47" y="9.5" width="1" height="1" fill="#aaa"/><rect x="793.25" y="6.5" width="1" height="4" fill="#8a8a8a"/><rect x="797.03" y="9.5" width="1" height="1" fill="#aaa"/><rect x="800.82" y="9.5" width="1" height="1" fill="#aaa"/><rect x="804.61" y="9.5" width="1" height="1" fill="#aaa"/><rect x="808.39" y="9.5" width="1" height="1" fill="#aaa"/><rect x="812.18" y="8.5" width="1" height="2" fill="#555"/><rect x="815.96" y="9.5" width="1" height="1" fill="#aaa"/><rect x="819.75" y="9.5" width="1" height="1" fill="#aaa"/><rect x="823.53" y="9.5" width="1" height="1" fill="#aaa"/><rect x="827.32" y="9.5" width="1" height="1" fill="#aaa"/><rect x="831.10" y="6.5" width="1" height="4" fill="#8a8a8a"/><rect x="834.88" y="9.5" width="1" height="1" fill="#aaa"/><rect x="838.67" y="9.5" width="1" height="1" fill="#aaa"/><rect x="842.46" y="9.5" width="1" height="1" fill="#aaa"/><rect x="846.24" y="9.5" width="1" height="1" fill="#aaa"/><rect x="850.02" y="8.5" width="1" height="2" fill="#555"/><rect x="853.81" y="9.5" width="1" height="1" fill="#aaa"/><rect x="857.60" y="9.5" width="1" height="1" fill="#aaa"/><rect x="861.38" y="9.5" width="1" height="1" fill="#aaa"/><rect x="865.17" y="9.5" width="1" height="1" fill="#aaa"/><rect x="868.95" y="6.5" width="1" height="4" fill="#8a8a8a"/><rect x="872.74" y="9.5" width="1" height="1" fill="#aaa"/><rect x="876.52" y="9.5" width="1" height="1" fill="#aaa"/><rect x="880.31" y="9.5" width="1" height="1" fill="#aaa"/><rect x="884.09" y="9.5" width="1" height="1" fill="#aaa"/><rect x="887.88" y="8.5" width="1" height="2" fill="#555"/><rect x="891.66" y="9.5" width="1" height="1" fill="#aaa"/><rect x="895.45" y="9.5" width="1" height="1" fill="#aaa"/><rect x="899.23" y="9.5" width="1" height="1" fill="#aaa"/><rect x="903.01" y="9.5" width="1" height="1" fill="#aaa"/><rect x="906.80" y="6.5" width="1" height="4" fill="#8a8a8a"/><rect x="910.59" y="9.5" width="1" height="1" fill="#aaa"/><rect x="914.37" y="9.5" width="1" height="1" fill="#aaa"/><rect x="918.15" y="9.5" width="1" height="1" fill="#aaa"/><rect x="921.94" y="9.5" width="1" height="1" fill="#aaa"/><rect x="925.73" y="8.5" width="1" height="2" fill="#555"/><rect x="929.51" y="9.5" width="1" height="1" fill="#aaa"/><rect x="933.30" y="9.5" width="1" height="1" fill="#aaa"/><rect x="937.08" y="9.5" width="1" height="1" fill="#aaa"/><rect x="940.87" y="9.5" width="1" height="1" fill="#aaa"/><rect x="944.65" y="6.5" width="1" height="4" fill="#8a8a8a"/><rect x="948.44" y="9.5" width="1" height="1" fill="#aaa"/><rect x="952.22" y="9.5" width="1" height="1" fill="#aaa"/><rect x="956.00" y="9.5" width="1" height="1" fill="#aaa"/><rect x="959.79" y="9.5" width="1" height="1" fill="#aaa"/><rect x="963.58" y="8.5" width="1" height="2" fill="#555"/><rect x="967.36" y="9.5" width="1" height="1" fill="#aaa"/><rect x="971.14" y="9.5" width="1" height="1" fill="#aaa"/><rect x="974.93" y="9.5" width="1" height="1" fill="#aaa"/><rect x="978.72" y="9.5" width="1" height="1" fill="#aaa"/><rect x="982.50" y="6.5" width="1" height="4" fill="#8a8a8a"/><rect x="986.29" y="9.5" width="1" height="1" fill="#aaa"/><rect x="990.07" y="9.5" width="1" height="1" fill="#aaa"/><rect x="993.86" y="9.5" width="1" height="1" fill="#aaa"/><rect x="997.64" y="9.5" width="1" height="1" fill="#aaa"/><rect x="1001.43" y="8.5" width="1" height="2" fill="#555"/><rect x="1005.21" y="9.5" width="1" height="1" fill="#aaa"/><rect x="1008.99" y="9.5" width="1" height="1" fill="#aaa"/></svg>
<div class="a" style="left:33px;top:93px;width:1010px;height:11px;overflow:hidden"><div class="t" style="left:-21.60px;top:0.5px;width:40px;text-align:center;font-size:7px;color:#959595;-webkit-text-stroke:0">120</div><div class="t" style="left:16.25px;top:0.5px;width:40px;text-align:center;font-size:7px;color:#959595;-webkit-text-stroke:0">100</div><div class="t" style="left:54.10px;top:0.5px;width:40px;text-align:center;font-size:7px;color:#959595;-webkit-text-stroke:0">80</div><div class="t" style="left:91.95px;top:0.5px;width:40px;text-align:center;font-size:7px;color:#959595;-webkit-text-stroke:0">60</div><div class="t" style="left:129.80px;top:0.5px;width:40px;text-align:center;font-size:7px;color:#959595;-webkit-text-stroke:0">40</div><div class="t" style="left:167.65px;top:0.5px;width:40px;text-align:center;font-size:7px;color:#959595;-webkit-text-stroke:0">20</div><div class="t" style="left:205.50px;top:0.5px;width:40px;text-align:center;font-size:7px;color:#959595;-webkit-text-stroke:0">0</div><div class="t" style="left:243.35px;top:0.5px;width:40px;text-align:center;font-size:7px;color:#959595;-webkit-text-stroke:0">20</div><div class="t" style="left:281.20px;top:0.5px;width:40px;text-align:center;font-size:7px;color:#959595;-webkit-text-stroke:0">40</div><div class="t" style="left:319.05px;top:0.5px;width:40px;text-align:center;font-size:7px;color:#959595;-webkit-text-stroke:0">60</div><div class="t" style="left:356.90px;top:0.5px;width:40px;text-align:center;font-size:7px;color:#959595;-webkit-text-stroke:0">80</div><div class="t" style="left:394.75px;top:0.5px;width:40px;text-align:center;font-size:7px;color:#959595;-webkit-text-stroke:0">100</div><div class="t" style="left:432.60px;top:0.5px;width:40px;text-align:center;font-size:7px;color:#959595;-webkit-text-stroke:0">120</div><div class="t" style="left:470.45px;top:0.5px;width:40px;text-align:center;font-size:7px;color:#959595;-webkit-text-stroke:0">140</div><div class="t" style="left:508.30px;top:0.5px;width:40px;text-align:center;font-size:7px;color:#959595;-webkit-text-stroke:0">160</div><div class="t" style="left:546.15px;top:0.5px;width:40px;text-align:center;font-size:7px;color:#959595;-webkit-text-stroke:0">180</div><div class="t" style="left:584.00px;top:0.5px;width:40px;text-align:center;font-size:7px;color:#959595;-webkit-text-stroke:0">200</div><div class="t" style="left:621.85px;top:0.5px;width:40px;text-align:center;font-size:7px;color:#959595;-webkit-text-stroke:0">220</div><div class="t" style="left:659.70px;top:0.5px;width:40px;text-align:center;font-size:7px;color:#959595;-webkit-text-stroke:0">240</div><div class="t" style="left:697.55px;top:0.5px;width:40px;text-align:center;font-size:7px;color:#959595;-webkit-text-stroke:0">260</div><div class="t" style="left:735.40px;top:0.5px;width:40px;text-align:center;font-size:7px;color:#959595;-webkit-text-stroke:0">280</div><div class="t" style="left:773.25px;top:0.5px;width:40px;text-align:center;font-size:7px;color:#959595;-webkit-text-stroke:0">300</div><div class="t" style="left:811.10px;top:0.5px;width:40px;text-align:center;font-size:7px;color:#959595;-webkit-text-stroke:0">320</div><div class="t" style="left:848.95px;top:0.5px;width:40px;text-align:center;font-size:7px;color:#959595;-webkit-text-stroke:0">340</div><div class="t" style="left:886.80px;top:0.5px;width:40px;text-align:center;font-size:7px;color:#959595;-webkit-text-stroke:0">360</div><div class="t" style="left:924.65px;top:0.5px;width:40px;text-align:center;font-size:7px;color:#959595;-webkit-text-stroke:0">380</div></div>
<div class="t" style="left:1021px;top:94.81px;font-size:6.6px;color:#9a9a9a;letter-spacing:-0.048px;-webkit-text-stroke:0">millimeters</div>
<svg class="a" style="left:21px;top:104px;" width="12" height="537" viewBox="0 0 12 537"><rect x="10" y="3.75" width="1" height="1" fill="#aaa"/><rect x="10" y="7.53" width="1" height="1" fill="#aaa"/><rect x="10" y="11.32" width="1" height="1" fill="#aaa"/><rect x="7" y="15.10" width="4" height="1" fill="#8a8a8a"/><rect x="10" y="18.89" width="1" height="1" fill="#aaa"/><rect x="10" y="22.67" width="1" height="1" fill="#aaa"/><rect x="10" y="26.46" width="1" height="1" fill="#aaa"/><rect x="10" y="30.24" width="1" height="1" fill="#aaa"/><rect x="9" y="34.03" width="2" height="1" fill="#999"/><rect x="10" y="37.81" width="1" height="1" fill="#aaa"/><rect x="10" y="41.60" width="1" height="1" fill="#aaa"/><rect x="10" y="45.38" width="1" height="1" fill="#aaa"/><rect x="10" y="49.17" width="1" height="1" fill="#aaa"/><rect x="7" y="52.95" width="4" height="1" fill="#8a8a8a"/><rect x="10" y="56.74" width="1" height="1" fill="#aaa"/><rect x="10" y="60.52" width="1" height="1" fill="#aaa"/><rect x="10" y="64.31" width="1" height="1" fill="#aaa"/><rect x="10" y="68.09" width="1" height="1" fill="#aaa"/><rect x="9" y="71.88" width="2" height="1" fill="#999"/><rect x="10" y="75.66" width="1" height="1" fill="#aaa"/><rect x="10" y="79.45" width="1" height="1" fill="#aaa"/><rect x="10" y="83.23" width="1" height="1" fill="#aaa"/><rect x="10" y="87.02" width="1" height="1" fill="#aaa"/><rect x="7" y="90.80" width="4" height="1" fill="#8a8a8a"/><rect x="10" y="94.59" width="1" height="1" fill="#aaa"/><rect x="10" y="98.37" width="1" height="1" fill="#aaa"/><rect x="10" y="102.16" width="1" height="1" fill="#aaa"/><rect x="10" y="105.94" width="1" height="1" fill="#aaa"/><rect x="9" y="109.73" width="2" height="1" fill="#999"/><rect x="10" y="113.51" width="1" height="1" fill="#aaa"/><rect x="10" y="117.30" width="1" height="1" fill="#aaa"/><rect x="10" y="121.08" width="1" height="1" fill="#aaa"/><rect x="10" y="124.87" width="1" height="1" fill="#aaa"/><rect x="7" y="128.65" width="4" height="1" fill="#8a8a8a"/><rect x="10" y="132.44" width="1" height="1" fill="#aaa"/><rect x="10" y="136.22" width="1" height="1" fill="#aaa"/><rect x="10" y="140.00" width="1" height="1" fill="#aaa"/><rect x="10" y="143.79" width="1" height="1" fill="#aaa"/><rect x="9" y="147.58" width="2" height="1" fill="#999"/><rect x="10" y="151.36" width="1" height="1" fill="#aaa"/><rect x="10" y="155.14" width="1" height="1" fill="#aaa"/><rect x="10" y="158.93" width="1" height="1" fill="#aaa"/><rect x="10" y="162.72" width="1" height="1" fill="#aaa"/><rect x="7" y="166.50" width="4" height="1" fill="#8a8a8a"/><rect x="10" y="170.29" width="1" height="1" fill="#aaa"/><rect x="10" y="174.07" width="1" height="1" fill="#aaa"/><rect x="10" y="177.86" width="1" height="1" fill="#aaa"/><rect x="10" y="181.64" width="1" height="1" fill="#aaa"/><rect x="9" y="185.43" width="2" height="1" fill="#999"/><rect x="10" y="189.21" width="1" height="1" fill="#aaa"/><rect x="10" y="193.00" width="1" height="1" fill="#aaa"/><rect x="10" y="196.78" width="1" height="1" fill="#aaa"/><rect x="10" y="200.56" width="1" height="1" fill="#aaa"/><rect x="7" y="204.35" width="4" height="1" fill="#8a8a8a"/><rect x="10" y="208.13" width="1" height="1" fill="#aaa"/><rect x="10" y="211.92" width="1" height="1" fill="#aaa"/><rect x="10" y="215.71" width="1" height="1" fill="#aaa"/><rect x="10" y="219.49" width="1" height="1" fill="#aaa"/><rect x="9" y="223.27" width="2" height="1" fill="#999"/><rect x="10" y="227.06" width="1" height="1" fill="#aaa"/><rect x="10" y="230.85" width="1" height="1" fill="#aaa"/><rect x="10" y="234.63" width="1" height="1" fill="#aaa"/><rect x="10" y="238.42" width="1" height="1" fill="#aaa"/><rect x="7" y="242.20" width="4" height="1" fill="#8a8a8a"/><rect x="10" y="245.99" width="1" height="1" fill="#aaa"/><rect x="10" y="249.77" width="1" height="1" fill="#aaa"/><rect x="10" y="253.56" width="1" height="1" fill="#aaa"/><rect x="10" y="257.34" width="1" height="1" fill="#aaa"/><rect x="9" y="261.12" width="2" height="1" fill="#999"/><rect x="10" y="264.91" width="1" height="1" fill="#aaa"/><rect x="10" y="268.70" width="1" height="1" fill="#aaa"/><rect x="10" y="272.48" width="1" height="1" fill="#aaa"/><rect x="10" y="276.26" width="1" height="1" fill="#aaa"/><rect x="7" y="280.05" width="4" height="1" fill="#8a8a8a"/><rect x="10" y="283.84" width="1" height="1" fill="#aaa"/><rect x="10" y="287.62" width="1" height="1" fill="#aaa"/><rect x="10" y="291.41" width="1" height="1" fill="#aaa"/><rect x="10" y="295.19" width="1" height="1" fill="#aaa"/><rect x="9" y="298.98" width="2" height="1" fill="#999"/><rect x="10" y="302.76" width="1" height="1" fill="#aaa"/><rect x="10" y="306.55" width="1" height="1" fill="#aaa"/><rect x="10" y="310.33" width="1" height="1" fill="#aaa"/><rect x="10" y="314.12" width="1" height="1" fill="#aaa"/><rect x="7" y="317.90" width="4" height="1" fill="#8a8a8a"/><rect x="10" y="321.69" width="1" height="1" fill="#aaa"/><rect x="10" y="325.47" width="1" height="1" fill="#aaa"/><rect x="10" y="329.25" width="1" height="1" fill="#aaa"/><rect x="10" y="333.04" width="1" height="1" fill="#aaa"/><rect x="9" y="336.83" width="2" height="1" fill="#999"/><rect x="10" y="340.61" width="1" height="1" fill="#aaa"/><rect x="10" y="344.39" width="1" height="1" fill="#aaa"/><rect x="10" y="348.18" width="1" height="1" fill="#aaa"/><rect x="10" y="351.97" width="1" height="1" fill="#aaa"/><rect x="7" y="355.75" width="4" height="1" fill="#8a8a8a"/><rect x="10" y="359.54" width="1" height="1" fill="#aaa"/><rect x="10" y="363.32" width="1" height="1" fill="#aaa"/><rect x="10" y="367.11" width="1" height="1" fill="#aaa"/><rect x="10" y="370.89" width="1" height="1" fill="#aaa"/><rect x="9" y="374.68" width="2" height="1" fill="#999"/><rect x="10" y="378.46" width="1" height="1" fill="#aaa"/><rect x="10" y="382.25" width="1" height="1" fill="#aaa"/><rect x="10" y="386.03" width="1" height="1" fill="#aaa"/><rect x="10" y="389.81" width="1" height="1" fill="#aaa"/><rect x="7" y="393.60" width="4" height="1" fill="#8a8a8a"/><rect x="10" y="397.39" width="1" height="1" fill="#aaa"/><rect x="10" y="401.17" width="1" height="1" fill="#aaa"/><rect x="10" y="404.96" width="1" height="1" fill="#aaa"/><rect x="10" y="408.74" width="1" height="1" fill="#aaa"/><rect x="9" y="412.53" width="2" height="1" fill="#999"/><rect x="10" y="416.31" width="1" height="1" fill="#aaa"/><rect x="10" y="420.10" width="1" height="1" fill="#aaa"/><rect x="10" y="423.88" width="1" height="1" fill="#aaa"/><rect x="10" y="427.66" width="1" height="1" fill="#aaa"/><rect x="7" y="431.45" width="4" height="1" fill="#8a8a8a"/><rect x="10" y="435.24" width="1" height="1" fill="#aaa"/><rect x="10" y="439.02" width="1" height="1" fill="#aaa"/><rect x="10" y="442.81" width="1" height="1" fill="#aaa"/><rect x="10" y="446.59" width="1" height="1" fill="#aaa"/><rect x="9" y="450.38" width="2" height="1" fill="#999"/><rect x="10" y="454.16" width="1" height="1" fill="#aaa"/><rect x="10" y="457.95" width="1" height="1" fill="#aaa"/><rect x="10" y="461.73" width="1" height="1" fill="#aaa"/><rect x="10" y="465.52" width="1" height="1" fill="#aaa"/><rect x="7" y="469.30" width="4" height="1" fill="#8a8a8a"/><rect x="10" y="473.09" width="1" height="1" fill="#aaa"/><rect x="10" y="476.87" width="1" height="1" fill="#aaa"/><rect x="10" y="480.65" width="1" height="1" fill="#aaa"/><rect x="10" y="484.44" width="1" height="1" fill="#aaa"/><rect x="9" y="488.23" width="2" height="1" fill="#999"/><rect x="10" y="492.01" width="1" height="1" fill="#aaa"/><rect x="10" y="495.80" width="1" height="1" fill="#aaa"/><rect x="10" y="499.58" width="1" height="1" fill="#aaa"/><rect x="10" y="503.37" width="1" height="1" fill="#aaa"/><rect x="7" y="507.15" width="4" height="1" fill="#8a8a8a"/><rect x="10" y="510.93" width="1" height="1" fill="#aaa"/><rect x="10" y="514.72" width="1" height="1" fill="#aaa"/><rect x="10" y="518.51" width="1" height="1" fill="#aaa"/><rect x="10" y="522.29" width="1" height="1" fill="#aaa"/><rect x="9" y="526.08" width="2" height="1" fill="#999"/><rect x="10" y="529.86" width="1" height="1" fill="#aaa"/><rect x="10" y="533.64" width="1" height="1" fill="#aaa"/></svg>
<div class="t" style="left:7.00px;top:115.60px;width:40px;text-align:center;font-size:7px;color:#959595;-webkit-text-stroke:0;transform:translateX(-0.5px) rotate(-90deg);transform-origin:20px 3.5px">240</div>
<div class="t" style="left:7.00px;top:153.45px;width:40px;text-align:center;font-size:7px;color:#959595;-webkit-text-stroke:0;transform:translateX(-0.5px) rotate(-90deg);transform-origin:20px 3.5px">220</div>
<div class="t" style="left:7.00px;top:191.30px;width:40px;text-align:center;font-size:7px;color:#959595;-webkit-text-stroke:0;transform:translateX(-0.5px) rotate(-90deg);transform-origin:20px 3.5px">200</div>
<div class="t" style="left:7.00px;top:229.15px;width:40px;text-align:center;font-size:7px;color:#959595;-webkit-text-stroke:0;transform:translateX(-0.5px) rotate(-90deg);transform-origin:20px 3.5px">180</div>
<div class="t" style="left:7.00px;top:267.00px;width:40px;text-align:center;font-size:7px;color:#959595;-webkit-text-stroke:0;transform:translateX(-0.5px) rotate(-90deg);transform-origin:20px 3.5px">160</div>
<div class="t" style="left:7.00px;top:304.85px;width:40px;text-align:center;font-size:7px;color:#959595;-webkit-text-stroke:0;transform:translateX(-0.5px) rotate(-90deg);transform-origin:20px 3.5px">140</div>
<div class="t" style="left:7.00px;top:342.70px;width:40px;text-align:center;font-size:7px;color:#959595;-webkit-text-stroke:0;transform:translateX(-0.5px) rotate(-90deg);transform-origin:20px 3.5px">120</div>
<div class="t" style="left:7.00px;top:380.55px;width:40px;text-align:center;font-size:7px;color:#959595;-webkit-text-stroke:0;transform:translateX(-0.5px) rotate(-90deg);transform-origin:20px 3.5px">100</div>
<div class="t" style="left:7.00px;top:418.40px;width:40px;text-align:center;font-size:7px;color:#959595;-webkit-text-stroke:0;transform:translateX(-0.5px) rotate(-90deg);transform-origin:20px 3.5px">80</div>
<div class="t" style="left:7.00px;top:456.25px;width:40px;text-align:center;font-size:7px;color:#959595;-webkit-text-stroke:0;transform:translateX(-0.5px) rotate(-90deg);transform-origin:20px 3.5px">60</div>
<div class="t" style="left:7.00px;top:494.10px;width:40px;text-align:center;font-size:7px;color:#959595;-webkit-text-stroke:0;transform:translateX(-0.5px) rotate(-90deg);transform-origin:20px 3.5px">40</div>
<div class="t" style="left:7.00px;top:531.95px;width:40px;text-align:center;font-size:7px;color:#959595;-webkit-text-stroke:0;transform:translateX(-0.5px) rotate(-90deg);transform-origin:20px 3.5px">20</div>
<div class="t" style="left:7.00px;top:569.80px;width:40px;text-align:center;font-size:7px;color:#959595;-webkit-text-stroke:0;transform:translateX(-0.5px) rotate(-90deg);transform-origin:20px 3.5px">0</div>
<div class="t" style="left:7.00px;top:607.65px;width:40px;text-align:center;font-size:7px;color:#959595;-webkit-text-stroke:0;transform:translateX(-0.5px) rotate(-90deg);transform-origin:20px 3.5px">20</div>
<svg class="a" style="left:21px;top:398px;" width="12" height="2" viewBox="0 0 12 2"><rect x="1" y="0.3" width="1.6" height="1.5" fill="#222"/><rect x="4.5" y="0.3" width="1.6" height="1.5" fill="#222"/><rect x="8.3" y="0.3" width="1.6" height="1.5" fill="#222"/></svg>
<svg class="a" style="left:471px;top:93px;" width="2" height="11" viewBox="0 0 2 11"><rect x="0.3" y="1" width="1.5" height="1.6" fill="#222"/><rect x="0.3" y="4.5" width="1.5" height="1.6" fill="#222"/><rect x="0.3" y="8.3" width="1.5" height="1.6" fill="#222"/></svg>
<div class="a" style="left:33px;top:104px;width:1011px;height:538px;background:#ffffff;"></div>
<div class="a" style="left:258px;top:175px;width:563px;height:1.1px;background:#c0c0c0;"></div>
<div class="a" style="left:258px;top:175px;width:1.1px;height:398px;background:#c0c0c0;"></div>
<div class="a" style="left:820px;top:176px;width:4.5px;height:400.3px;background:#b9b9b9;"></div>
<div class="a" style="left:259px;top:573px;width:565.5px;height:3.3px;background:#b9b9b9;"></div>
<div class="a" style="left:425px;top:279px;width:161px;height:164px;background:#03a0f2;border:1px solid #1a4f75"></div>
<div class="a" style="left:459px;top:312px;width:94px;height:98px;background:#231f20;"></div>
<svg class="a" style="left:423px;top:276px;" width="5" height="5" viewBox="0 0 5 5"><rect x="0.5" y="0.5" width="4" height="4" fill="#fff" stroke="#222" stroke-width="1"/></svg>
<svg class="a" style="left:457px;top:310px;" width="4" height="4" viewBox="0 0 4 4"><rect x="0.5" y="0.5" width="3" height="3" fill="#fff" stroke="#555" stroke-width="0.8"/></svg>
<svg class="a" style="left:496px;top:272px;" width="20" height="48" viewBox="0 0 20 48"><path d="M9.5 1 L14 6 L9.5 12 L5 6Z" fill="#111"/><rect x="1.5" y="5.3" width="16" height="2.7" fill="#e8f8ff" stroke="#555" stroke-width="0.5"/><path d="M9.5 12 V24" stroke="#d8f0ff" stroke-width="2.6"/><path d="M9.5 12 V24" stroke="#111" stroke-width="1"/><path d="M4.8 24 H14.2 L9.5 32.5Z" fill="#111" stroke="#d8f0ff" stroke-width="0.8"/><rect x="4.3" y="34.3" width="10.4" height="11" rx="1.3" fill="#231f20" stroke="#ddd" stroke-width="1"/></svg>
<div class="a" style="left:453px;top:380.2px;width:39px;height:39px;border-radius:50%;background:rgba(255,238,0,0.26)"></div>
<svg class="a" style="left:470px;top:398px;" width="22" height="22" viewBox="0 0 22 22"><path d="M1.5 0.8 L1.5 13 L4.3 10.5 L6.5 15 L8.5 14 L6.3 9.6 L10 9.6Z" fill="#000" stroke="#fff" stroke-width="0.9"/><rect x="9.5" y="8.7" width="11.5" height="11.5" fill="#000" stroke="#cfe6f0" stroke-width="1"/><path d="M15.25 10.5 V18.5 M11.3 14.45 H19.2" stroke="#bfe8f5" stroke-width="1.6"/><path d="M13 12.5 H17.5 V16.5 H13Z" fill="none" stroke="#bfe8f5" stroke-width="0.8"/></svg>
<div class="a" style="left:1044px;top:104px;width:11px;height:538px;background:#ffffff;"></div>
<div class="a" style="left:1044px;top:105px;width:10px;height:11px;background:#f0f0f0;"></div>
<svg class="a" style="left:1046px;top:108px;" width="7" height="5" viewBox="0 0 7 5"><path d="M0.8 4 L3.5 1.2 L6.2 4" fill="none" stroke="#333" stroke-width="1.3"/></svg>
<div class="a" style="left:1044px;top:220px;width:10px;height:307px;background:#cdcdcd;"></div>
<div class="a" style="left:1044px;top:631px;width:10px;height:10px;background:#f0f0f0;"></div>
<svg class="a" style="left:1046px;top:634px;" width="7" height="5" viewBox="0 0 7 5"><path d="M0.8 1 L3.5 3.8 L6.2 1" fill="none" stroke="#333" stroke-width="1.3"/></svg>
<div class="a" style="left:1055px;top:78px;width:2px;height:591px;background:#fdfdfd;"></div>
<div class="a" style="left:1057px;top:93px;width:1px;height:576px;background:#e2e2e2;"></div>
<div class="a" style="left:21px;top:642px;width:1034px;height:12px;background:#f0f0f0;"></div>
<div class="a" style="left:33px;top:642px;width:511px;height:1px;background:#b9b9b9;"></div>
<div class="a" style="left:544px;top:642px;width:1px;height:12px;background:#c8c8c8;"></div>
<div class="a" style="left:26px;top:647px;width:3px;height:1px;background:#999;"></div>
<svg class="a" style="left:131px;top:642px;" width="40" height="12" viewBox="0 0 40 12"><path d="M0 0.5 L3.5 11.5 H36.5 L40 0.5" fill="#fff" stroke="#a8a8a8" stroke-width="1"/><rect x="1" y="0" width="38.5" height="1" fill="#fff"/></svg>
<div class="t" style="left:138.5px;top:643.92px;font-size:8.6px;color:#222;letter-spacing:-0.626px;">Page 1</div>
<svg class="a" style="left:35px;top:645px;" width="8" height="8" viewBox="0 0 8 8"><rect x="0.5" y="0.5" width="6.5" height="7" fill="none" stroke="#a9a9a9"/><path d="M3.7 2.5 V6 M2 4.2 H5.4" stroke="#a9a9a9"/></svg>
<svg class="a" style="left:45px;top:645px;" width="8" height="7" viewBox="0 0 8 7"><rect x="0" y="0" width="1.3" height="7" fill="#a9a9a9"/><path d="M7.5 0 V7 L2 3.5Z" fill="#a9a9a9"/></svg>
<svg class="a" style="left:57px;top:645px;" width="6" height="7" viewBox="0 0 6 7"><path d="M6 0 V7 L0 3.5Z" fill="#a9a9a9"/></svg>
<div class="t" style="left:68px;top:645.12px;font-size:8.6px;color:#b0b0b0;letter-spacing:0.181px;">1 of 1</div>
<svg class="a" style="left:95.5px;top:645px;" width="6" height="7" viewBox="0 0 6 7"><path d="M0 0 V7 L6 3.5Z" fill="#a9a9a9"/></svg>
<svg class="a" style="left:105.5px;top:645px;" width="8" height="7" viewBox="0 0 8 7"><path d="M0 0 V7 L5.5 3.5Z" fill="#a9a9a9"/><rect x="6.5" y="0" width="1.3" height="7" fill="#a9a9a9"/></svg>
<svg class="a" style="left:117px;top:645px;" width="8" height="8" viewBox="0 0 8 8"><rect x="0.5" y="0.5" width="6.5" height="7" fill="none" stroke="#a9a9a9"/><path d="M3.7 2.5 V6 M2 4.2 H5.4" stroke="#a9a9a9"/></svg>
<div class="a" style="left:545px;top:642px;width:510px;height:12px;background:#ffffff;"></div>
<div class="a" style="left:545px;top:643px;width:11px;height:11px;background:#f0f0f0;"></div>
<svg class="a" style="left:547px;top:645px;" width="5" height="7" viewBox="0 0 5 7"><path d="M4 0.8 L1.2 3.5 L4 6.2" fill="none" stroke="#333" stroke-width="1.3"/></svg>
<div class="a" style="left:613px;top:643px;width:362px;height:10px;background:#cdcdcd;"></div>
<div class="a" style="left:1032px;top:643px;width:11px;height:11px;background:#f0f0f0;"></div>
<svg class="a" style="left:1035.5px;top:645px;" width="5" height="7" viewBox="0 0 5 7"><path d="M1 0.8 L3.8 3.5 L1 6.2" fill="none" stroke="#333" stroke-width="1.3"/></svg>
<svg class="a" style="left:1045px;top:644px;" width="10" height="10" viewBox="0 0 10 10"><circle cx="4" cy="4" r="3.2" fill="none" stroke="#777" stroke-width="0.9"/><path d="M2.5 4 H5.5 M4 2.5 V5.5" stroke="#777" stroke-width="0.8"/><path d="M6.3 6.3 L9 9" stroke="#555" stroke-width="1.3"/></svg>
<div class="a" style="left:21px;top:654px;width:1034px;height:1px;background:#dcdcdc;"></div>
<div class="a" style="left:21px;top:655px;width:1034px;height:13px;background:#f2f2f2;"></div>
<svg class="a" style="left:1030px;top:658px;" width="5" height="6" viewBox="0 0 5 6"><path d="M0.5 0.5 L4 3 L0.5 5.5" fill="none" stroke="#c8c8c8" stroke-width="1"/></svg>
<svg class="a" style="left:1042px;top:658px;" width="6" height="6" viewBox="0 0 6 6"><path d="M0.5 0.5 L2.8 3 L0.5 5.5 M3 0.5 L5.3 3 L3 5.5" fill="none" stroke="#c8c8c8" stroke-width="0.9"/></svg>
<div class="a" style="left:0px;top:668px;width:1057px;height:1px;background:#e0e0e0;"></div>
<svg class="a" style="left:22px;top:655px;" width="4" height="12" viewBox="0 0 4 12"><rect x="0" y="0" width="1" height="1" fill="#c8c8c8"/><rect x="2" y="2" width="1" height="1" fill="#c8c8c8"/><rect x="0" y="4" width="1" height="1" fill="#c8c8c8"/><rect x="2" y="6" width="1" height="1" fill="#c8c8c8"/><rect x="0" y="8" width="1" height="1" fill="#c8c8c8"/><rect x="2" y="10" width="1" height="1" fill="#c8c8c8"/></svg>
<svg class="a" style="left:31px;top:658px;" width="3" height="6" viewBox="0 0 3 6"><path d="M0 0 V6 L2.8 3Z" fill="#444"/></svg>
<svg class="a" style="left:42px;top:655px;" width="9" height="11" viewBox="0 0 9 11"><path d="M1 10 L5.5 5.5" stroke="#8a5a30" stroke-width="1.8"/><path d="M5 4 L7.5 1 Q9 1 9 2.5 L6.5 6Z" fill="#222"/></svg>
<svg class="a" style="left:56px;top:657px;" width="4" height="7" viewBox="0 0 4 7"><path d="M3.5 0.5 L0.7 3.5 L3.5 6.5" fill="none" stroke="#bbb" stroke-width="1"/></svg>
<div class="a" style="left:64px;top:655px;width:170.5px;height:12px;background:#777;"></div>
<svg class="a" style="left:64.5px;top:655.5px;" width="11" height="11" viewBox="0 0 11 11"><rect x="0" y="0" width="11" height="11" fill="#fff"/><path d="M1.5 9.5 L9.5 1.5" stroke="#c04040" stroke-width="0.8"/></svg>
<div class="a" style="left:75.33px;top:655.5px;width:11.4px;height:11px;background:#ffffff;"></div>
<div class="a" style="left:86.66px;top:655.5px;width:11.4px;height:11px;background:#2e3192;"></div>
<div class="a" style="left:97.99px;top:655.5px;width:11.4px;height:11px;background:#0aa0e8;"></div>
<div class="a" style="left:109.32px;top:655.5px;width:11.4px;height:11px;background:#8dd4f6;"></div>
<div class="a" style="left:120.65px;top:655.5px;width:11.4px;height:11px;background:#e8334a;"></div>
<div class="a" style="left:131.98px;top:655.5px;width:11.4px;height:11px;background:#37b3c9;"></div>
<div class="a" style="left:143.31px;top:655.5px;width:11.4px;height:11px;background:#3aa64a;"></div>
<div class="a" style="left:154.64px;top:655.5px;width:11.4px;height:11px;background:#4c4ba3;"></div>
<div class="a" style="left:165.97px;top:655.5px;width:11.4px;height:11px;background:#e5258f;"></div>
<div class="a" style="left:177.3px;top:655.5px;width:11.4px;height:11px;background:#8c8c8c;"></div>
<div class="a" style="left:188.63px;top:655.5px;width:11.4px;height:11px;background:#424242;"></div>
<div class="a" style="left:199.96px;top:655.5px;width:11.4px;height:11px;background:#3b3b3b;"></div>
<div class="a" style="left:211.29px;top:655.5px;width:11.4px;height:11px;background:#323232;"></div>
<div class="a" style="left:222.62px;top:655.5px;width:11.4px;height:11px;background:#060606;"></div>
<div class="a" style="left:75.3px;top:655.5px;width:0.8px;height:11px;background:#999;"></div>
<div class="a" style="left:86.5px;top:655.5px;width:0.8px;height:11px;background:#999;"></div>
<div class="a" style="left:0px;top:669px;width:1280px;height:24px;background:#f3f3f3;"></div>
<svg class="a" style="left:7px;top:675px;" width="13" height="13" viewBox="0 0 13 13"><g transform="translate(5.5 5.5)"><path d="M-1 -5.5 H1 L1.4 -3.8 L3 -4.7 L4.4 -3.3 L3.6 -1.6 L5.5 -1 V1 L3.8 1.4 L4.7 3 L3.3 4.4 L1.6 3.6 L1 5.5 H-1 L-1.4 3.8 L-3 4.7 L-4.4 3.3 L-3.6 1.6 L-5.5 1 V-1 L-3.8 -1.4 L-4.7 -3 L-3.3 -4.4 L-1.6 -3.6Z" fill="#222"/><circle r="2.5" fill="#f3f3f3"/></g><path d="M10 12.5 L12.5 10 V12.5Z" fill="#555"/></svg>
<div class="t" style="left:23.8px;top:676.72px;font-size:8.6px;color:#222;letter-spacing:-0.217px;">Click+drag outwards contours to the outside; click+drag inwards contours to the middle; click+drag to middle contours to the center</div>
<div class="t" style="left:507px;top:676.72px;font-size:8.6px;color:#222;letter-spacing:-0.368px;">Contour on Layer 1</div>
<svg class="a" style="left:955px;top:675px;" width="12" height="12" viewBox="0 0 12 12"><path d="M5 1 L10 6 L5 11 L0.8 6Z" fill="#fff" stroke="#222" stroke-width="1.2"/><path d="M2.5 6.5 Q5 9 7.8 6.5" fill="#d03030"/><path d="M9.5 9 L12 11.5 V9Z" fill="#d03030"/></svg>
<div class="a" style="left:968px;top:674px;width:14px;height:13.5px;background:#05a0f0;"></div>
<div class="t" style="left:984.7px;top:676.72px;font-size:8.6px;color:#222;letter-spacing:-0.549px;">C:100 M:0 Y:0 K:0</div>
<svg class="a" style="left:1092px;top:675px;" width="7" height="12" viewBox="0 0 7 12"><path d="M3.5 0.5 L6.3 5 L5.5 7.5 H1.5 L0.7 5Z" fill="#fff" stroke="#333" stroke-width="0.9"/><rect x="1.5" y="8" width="4" height="3.5" fill="#fff" stroke="#333" stroke-width="0.9"/></svg>
<div class="a" style="left:1101px;top:674px;width:13.5px;height:13.5px;background:#231f20;"></div>
<div class="t" style="left:1117.7px;top:676.72px;font-size:8.6px;color:#222;letter-spacing:-0.526px;">C:0 M:0 Y:0 K:100  0.567 pt</div>
<div class="a" style="left:1255px;top:672px;width:1px;height:18px;background:#dcdcdc;"></div>
<svg class="a" style="left:1262px;top:675px;" width="13" height="12" viewBox="0 0 13 12"><rect x="0.5" y="0.5" width="12" height="8.5" fill="#d8eefa" stroke="#2a5fa8" stroke-width="1"/><rect x="2" y="2" width="9" height="3" fill="#e04040"/><path d="M4 11.5 H9 M6.5 9 V11.5" stroke="#2a5fa8" stroke-width="1.2"/></svg>
<div class="a" style="left:0px;top:693px;width:1280px;height:27px;background:#1d2a37;"></div>
<svg class="a" style="left:10px;top:700px;" width="12" height="12" viewBox="0 0 12 12"><g fill="#fff"><path d="M0 1.3 L5 0.6 V5.6 H0Z"/><path d="M6 0.5 L12 -0.3 V5.6 H6Z"/><path d="M0 6.5 H5 V11.4 L0 10.7Z"/><path d="M6 6.5 H12 V12.3 L6 11.5Z"/></g></svg>
<svg class="a" style="left:41px;top:698px;" width="18" height="17" viewBox="0 0 18 17"><defs><linearGradient id="eg" x1="0" y1="1" x2="1" y2="0"><stop offset="0" stop-color="#0b4fa0"/><stop offset="0.55" stop-color="#1e8fe0"/><stop offset="1" stop-color="#4cc88a"/></linearGradient></defs><circle cx="9" cy="8.5" r="8.3" fill="url(#eg)"/><ellipse cx="10.3" cy="10" rx="3.6" ry="2.9" fill="#1d2a37"/><path d="M5 9 Q6 4.5 11 4.8 Q15.5 5.5 16.5 9.5 Q13 6.5 9 7.5 Q6.5 8.5 5 9Z" fill="#5ad0a0" opacity="0.55"/></svg>
<svg class="a" style="left:74px;top:698px;" width="16" height="17" viewBox="0 0 16 17"><path d="M5 4 Q5 0.5 8 0.5 Q11 0.5 11 4" fill="none" stroke="#58a8e8" stroke-width="1.2"/><rect x="0.5" y="3.5" width="15" height="13" rx="1.5" fill="#f4f4f4"/><rect x="4.5" y="7" width="3" height="3" fill="#f25022"/><rect x="8.5" y="7" width="3" height="3" fill="#7fba00"/><rect x="4.5" y="11" width="3" height="3" fill="#00a4ef"/><rect x="8.5" y="11" width="3" height="3" fill="#ffb900"/></svg>
<svg class="a" style="left:106px;top:699px;" width="18" height="15" viewBox="0 0 18 15"><path d="M0.5 5 L9 0.5 L17.5 5 V14.5 H0.5Z" fill="#2a8ad8"/><path d="M0.5 5 L9 10 L17.5 5" fill="#58b4f0"/><path d="M0.5 14.5 L9 8.5 L17.5 14.5" fill="#3aa0e8"/></svg>
<svg class="a" style="left:140px;top:698px;" width="16" height="16" viewBox="0 0 16 16"><rect x="0.5" y="0.5" width="15" height="15" rx="1.5" fill="#0a2136" stroke="#31a8ff" stroke-width="1"/><text x="2.7" y="11.3" font-family="Liberation Sans" font-size="8" font-weight="bold" fill="#31a8ff">Ps</text></svg>
<svg class="a" style="left:172px;top:698px;" width="16" height="16" viewBox="0 0 16 16"><rect x="0.5" y="0.5" width="15" height="15" rx="1.5" fill="#3a0a24" stroke="#ff3d8d" stroke-width="1"/><text x="3.5" y="11.3" font-family="Liberation Sans" font-size="8" font-weight="bold" fill="#ff3d8d">Id</text></svg>
<svg class="a" style="left:205px;top:698px;" width="16" height="17" viewBox="0 0 16 17"><rect x="4" y="1.5" width="11" height="13" fill="#ede0f4"/><rect x="0.5" y="3" width="10" height="11" fill="#7b3aa6"/><text x="2" y="11.7" font-family="Liberation Sans" font-size="8" font-weight="bold" fill="#fff">N</text></svg>
<svg class="a" style="left:237px;top:698px;" width="17" height="17" viewBox="0 0 17 17"><circle cx="8.5" cy="8.5" r="8.2" fill="#db4437"/><path d="M8.5 8.5 L1.4 4.4 A8.2 8.2 0 0 0 8.5 16.7Z" fill="#0f9d58"/><path d="M8.5 8.5 L8.5 16.7 A8.2 8.2 0 0 0 15.6 4.4Z" fill="#ffcd40"/><circle cx="8.5" cy="8.5" r="3.8" fill="#fff"/><circle cx="8.5" cy="8.5" r="3" fill="#4285f4"/></svg>
<svg class="a" style="left:270px;top:697px;" width="17" height="18" viewBox="0 0 17 18"><circle cx="8.5" cy="10" r="7.5" fill="#ff7139"/><path d="M3 4 Q6 0.5 9 2 Q12 0 13 3 Q16 6 15.5 9" fill="#ffbd4f"/><circle cx="8.5" cy="10" r="4.2" fill="#9059ff"/><path d="M5 8 Q8 6 11.5 8.5 Q10 13 6 12.5Z" fill="#b833e1" opacity="0.6"/></svg>
<div class="a" style="left:265px;top:718px;width:27px;height:2px;background:#76b9ed;"></div>
<svg class="a" style="left:303px;top:700px;" width="16" height="13" viewBox="0 0 16 13"><rect x="0" y="0" width="16" height="13" fill="#4aa8e0"/><rect x="2" y="2" width="6" height="6" fill="#9fd8f8"/><path d="M1 12 L7 7 L10 9 L15 5 V12Z" fill="#e0f2fc" opacity="0.7"/></svg>
<svg class="a" style="left:336px;top:698px;" width="16" height="17" viewBox="0 0 16 17"><rect x="5" y="1.5" width="10.5" height="14" fill="#e8eef8"/><path d="M8 5 H14 M8 8 H14 M8 11 H14" stroke="#2b579a" stroke-width="0.9"/><rect x="0.5" y="3" width="9" height="11" fill="#2b579a"/><text x="1.2" y="11.5" font-family="Liberation Sans" font-size="7.5" font-weight="bold" fill="#fff">W</text></svg>
<svg class="a" style="left:369px;top:699px;" width="16" height="15" viewBox="0 0 16 15"><path d="M0.5 2 H6 L7.5 3.5 H15.5 V14.5 H0.5Z" fill="#e8a82c"/><rect x="0.5" y="5" width="15" height="9.5" fill="#ffd45c"/><rect x="3" y="10" width="10" height="3" fill="#3a8ad0"/></svg>
<div class="a" style="left:363px;top:718px;width:27px;height:2px;background:#76b9ed;"></div>
<svg class="a" style="left:401px;top:698px;" width="17" height="17" viewBox="0 0 17 17"><circle cx="8.5" cy="8.5" r="8" fill="#f2f2f2"/><circle cx="8.5" cy="8.5" r="6.8" fill="#111"/><circle cx="8.5" cy="8.5" r="5.3" fill="#e81c1c"/></svg>
<div class="a" style="left:395px;top:718px;width:27px;height:2px;background:#76b9ed;"></div>
<div class="a" style="left:426px;top:693px;width:32px;height:27px;background:#46535f;"></div>
<svg class="a" style="left:433px;top:698px;" width="17" height="17" viewBox="0 0 17 17"><circle cx="8.5" cy="8.5" r="8" fill="#7ab83e"/><circle cx="8.5" cy="8.5" r="6.6" fill="#102010"/><path d="M4.5 4.8 L6.8 3.9 L12.3 9.3 L11.5 12.2 Z" fill="#eef4ea"/><path d="M6 5 L11 10" stroke="#708a68" stroke-width="0.7"/></svg>
<div class="a" style="left:427px;top:718px;width:31px;height:2px;background:#76b9ed;"></div>
<svg class="a" style="left:467px;top:698px;" width="17" height="17" viewBox="0 0 17 17"><path d="M2 5 H10 L6 10Z" fill="#e07030"/><rect x="5.5" y="10" width="1" height="5" fill="#bbb"/><path d="M3 15.5 H9" stroke="#bbb"/><circle cx="12.5" cy="10" r="4" fill="#e8a830"/><path d="M11 5 L13 2 L15 5" fill="#48a030"/></svg>
<div class="a" style="left:461px;top:718px;width:27px;height:2px;background:#76b9ed;"></div>
<svg class="a" style="left:1043px;top:701px;" width="13" height="13" viewBox="0 0 13 13"><path d="M8 0.5 A6.3 6.3 0 1 0 12.5 9 A5.2 5.2 0 0 1 8 0.5Z" fill="#ffc93c"/></svg>
<div class="t" style="left:1061.6px;top:703.47px;font-size:9.6px;color:#ffffff;letter-spacing:-0.345px;">25°F</div>
<div class="t" style="left:1085.7px;top:703.47px;font-size:9.6px;color:#ffffff;letter-spacing:-0.288px;">Clear</div>
<svg class="a" style="left:1118px;top:703px;" width="9" height="6" viewBox="0 0 9 6"><path d="M0.8 5 L4.5 1.2 L8.2 5" fill="none" stroke="#fff" stroke-width="1.1"/></svg>
<svg class="a" style="left:1133px;top:700px;" width="9" height="13" viewBox="0 0 9 13"><rect x="2" y="0.5" width="5" height="8.5" rx="2.5" fill="#e8e8e8"/><path d="M0.8 6 Q0.8 10.5 4.5 10.5 Q8.2 10.5 8.2 6 M4.5 10.5 V12.5 M2.5 12.5 H6.5" fill="none" stroke="#e8e8e8" stroke-width="1"/></svg>
<svg class="a" style="left:1148px;top:701px;" width="12" height="12" viewBox="0 0 12 12"><path d="M6 0.5 Q7 0.5 7 2 V4.5 L11.5 6.5 V8 L7 7 V9.5 L8.5 10.8 V11.5 L6 11 L3.5 11.5 V10.8 L5 9.5 V7 L0.5 8 V6.5 L5 4.5 V2 Q5 0.5 6 0.5Z" fill="none" stroke="#fff" stroke-width="0.9"/></svg>
<svg class="a" style="left:1164px;top:701px;" width="12" height="12" viewBox="0 0 12 12"><path d="M0.5 4 H3 L6.5 1 V11 L3 8 H0.5Z" fill="none" stroke="#fff" stroke-width="0.9"/><path d="M8 4 Q9.2 6 8 8 M9.6 2.5 Q11.8 6 9.6 9.5" fill="none" stroke="#fff" stroke-width="0.9"/></svg>
<div class="t" style="left:1182px;top:701.99px;font-size:8.4px;color:#ffffff;letter-spacing:-0.868px;">ENG</div>
<div class="t" style="left:1207.7px;top:697.49px;font-size:8.4px;color:#ffffff;letter-spacing:-0.532px;">10:02 PM</div>
<div class="t" style="left:1204.4px;top:708.89px;font-size:8.4px;color:#ffffff;letter-spacing:-0.394px;">12/28/2021</div>
<svg class="a" style="left:1252px;top:699px;" width="17" height="17" viewBox="0 0 17 17"><path d="M0.5 0.5 H12.5 V9.5 H5 L2.5 12 V9.5 H0.5Z" fill="none" stroke="#fff" stroke-width="1"/><path d="M3 3.5 H10 M3 6 H10" stroke="#fff" stroke-width="0.9"/><circle cx="12" cy="12" r="4.3" fill="#1d2a37" stroke="#fff" stroke-width="0.9"/><text x="9.7" y="14.8" font-family="Liberation Sans" font-size="7" font-weight="bold" fill="#fff">2</text></svg>
<div class="a" style="left:1058px;top:78px;width:194px;height:591px;background:#f2f2f2;"></div>
<div class="a" style="left:1058px;top:78px;width:208px;height:15px;background:#ececec;"></div>
<div class="a" style="left:1058px;top:93px;width:194px;height:1px;background:#dadada;"></div>
<div class="t" style="left:1062.2px;top:82.32px;font-size:8.6px;color:#222;letter-spacing:-0.475px;">Find and Replace</div>
<svg class="a" style="left:1240px;top:82px;" width="9" height="7" viewBox="0 0 9 7"><path d="M0.5 0.5 L4 3.5 L0.5 6.5Z M4.5 0.5 L8 3.5 L4.5 6.5Z" fill="#bbb"/></svg>
<svg class="a" style="left:1255px;top:81px;" width="8" height="8" viewBox="0 0 8 8"><path d="M0.5 0.5 L7.5 7.5 M7.5 0.5 L0.5 7.5" stroke="#aaa" stroke-width="1.1"/></svg>
<div class="a" style="left:1061px;top:102px;width:189px;height:16px;background:#ebebeb;border:1px solid #cdcdcd"></div>
<div class="t" style="left:1063.5px;top:106.22px;font-size:8.6px;color:#222;letter-spacing:-0.398px;">Find Objects</div>
<svg class="a" style="left:1241px;top:108px;" width="6" height="4" viewBox="0 0 6 4"><path d="M0 0 H6 L3 3.5Z" fill="#555"/></svg>
<div class="a" style="left:1061px;top:121px;width:150px;height:16px;background:#ebebeb;border:1px solid #cdcdcd"></div>
<div class="t" style="left:1063.5px;top:125.52px;font-size:8.6px;color:#222;letter-spacing:-0.271px;">Custom</div>
<svg class="a" style="left:1202px;top:127px;" width="6" height="4" viewBox="0 0 6 4"><path d="M0 0 H6 L3 3.5Z" fill="#555"/></svg>
<svg class="a" style="left:1215px;top:123px;" width="12" height="11" viewBox="0 0 12 11"><path d="M0.75 10.25 V1 H4 L5 2.3 H9.5 V4" fill="none" stroke="#222" stroke-width="1.2"/><path d="M0.75 10.25 L2.6 4.5 H11.5 L9.6 10.25 Z" fill="#fff" stroke="#222" stroke-width="1.2"/></svg>
<svg class="a" style="left:1235px;top:123px;" width="11" height="11" viewBox="0 0 11 11"><path d="M0 0 H9 L11 2 V11 H0Z" fill="#c8c8c8"/><rect x="2.5" y="0.8" width="5" height="3" fill="#e8e8e8"/><rect x="2.5" y="6.5" width="6" height="4.5" fill="#ececec"/></svg>
<svg class="a" style="left:1061px;top:142px;" width="8" height="8" viewBox="0 0 8 8"><circle cx="4" cy="4" r="3.5" fill="#fff" stroke="#bbb" stroke-width="0.8"/><circle cx="4" cy="4" r="2.2" fill="#111"/></svg>
<div class="t" style="left:1071.5px;top:142.32px;font-size:8.6px;color:#222;letter-spacing:-0.339px;">Properties</div>
<svg class="a" style="left:1061px;top:155px;" width="8" height="8" viewBox="0 0 8 8"><circle cx="4" cy="4" r="3.5" fill="#fff" stroke="#bbb" stroke-width="0.8"/></svg>
<div class="t" style="left:1071.5px;top:155.62px;font-size:8.6px;color:#222;letter-spacing:-0.459px;">Names or Styles</div>
<div class="a" style="left:1061px;top:179px;width:189px;height:1px;background:#dedede;"></div>
<div class="t" style="left:1060px;top:197.92px;font-size:8.6px;color:#111;letter-spacing:-0.499px;font-weight:bold;">Search query</div>
<svg class="a" style="left:1060px;top:216px;" width="12" height="11" viewBox="0 0 12 11"><path d="M1 0 V10 M0 1 H8 M7.5 0 V3" stroke="#555" stroke-width="0.9"/><circle cx="1" cy="1" r="1" fill="#555"/><circle cx="7.5" cy="1" r="1" fill="#555"/><circle cx="1" cy="10" r="1" fill="#555"/><path d="M5 5.5 H11 M5 7.5 H11 M5 9.5 H11" stroke="#555" stroke-width="0.8"/></svg>
<div class="t" style="left:1073.75px;top:217.72px;font-size:8.6px;color:#cfcfcf;letter-spacing:-0.328px;">Undefined</div>
<svg class="a" style="left:1060px;top:235px;" width="12" height="12" viewBox="0 0 12 12"><path d="M5 1 L10 6 L5 11 L0.8 6Z" fill="#fff" stroke="#222" stroke-width="1.1"/><path d="M2.5 6.5 Q5 9 7.8 6.5" fill="#d03030"/><path d="M9.5 9 L12 11.5 V9Z" fill="#d03030"/></svg>
<div class="t" style="left:1073.75px;top:236.32px;font-size:8.6px;color:#cfcfcf;letter-spacing:-0.328px;">Undefined</div>
<svg class="a" style="left:1061px;top:253px;" width="7" height="12" viewBox="0 0 7 12"><path d="M3.5 0.5 L6.3 5 L5.5 7.5 H1.5 L0.7 5Z" fill="#fff" stroke="#333" stroke-width="0.9"/><rect x="1.5" y="8" width="4" height="3.5" fill="#fff" stroke="#333" stroke-width="0.9"/></svg>
<div class="t" style="left:1073.75px;top:254.82px;font-size:8.6px;color:#cfcfcf;letter-spacing:-0.328px;">Undefined</div>
<div class="t" style="left:1060px;top:271.5px;font-family:'Liberation Serif',serif;font-style:italic;font-size:10.5px;color:#333">fx</div>
<div class="t" style="left:1073.75px;top:273.32px;font-size:8.6px;color:#cfcfcf;letter-spacing:-0.328px;">Undefined</div>
<div class="a" style="left:1061px;top:299px;width:189px;height:1px;background:#dedede;"></div>
<div class="a" style="left:1060px;top:314px;width:190px;height:16px;background:#e9e9e9;border:1px solid #c4c4c4"></div>
<div class="t" style="left:1134.0px;top:318.02px;font-size:8.6px;color:#222;letter-spacing:-0.470px;">Add Query...</div>
<div class="a" style="left:1060px;top:342.5px;width:190px;height:16.5px;background:#e9e9e9;border:1px solid #c4c4c4"></div>
<div class="t" style="left:1129.0px;top:346.77px;font-size:8.6px;color:#222;letter-spacing:-0.416px;">From Selection</div>
<div class="a" style="left:1060px;top:361px;width:190px;height:15.5px;background:#f2f2f2;border:1px solid #e0e0e0"></div>
<div class="t" style="left:1145.0px;top:364.77px;font-size:8.6px;color:#cdcdcd;letter-spacing:-0.493px;">Reset</div>
<div class="a" style="left:1060px;top:392px;width:93.5px;height:15.5px;background:#f2f2f2;border:1px solid #e0e0e0"></div>
<div class="t" style="left:1104.23853125px;top:395.77px;font-size:8.6px;color:#cdcdcd;">&lt;</div>
<div class="a" style="left:1156px;top:392px;width:94px;height:15.5px;background:#f2f2f2;border:1px solid #e0e0e0"></div>
<div class="t" style="left:1200.48853125px;top:395.77px;font-size:8.6px;color:#cdcdcd;">&gt;</div>
<div class="a" style="left:1060px;top:411.5px;width:190px;height:15.5px;background:#f2f2f2;border:1px solid #e0e0e0"></div>
<div class="t" style="left:1141.5px;top:415.27px;font-size:8.6px;color:#cdcdcd;letter-spacing:-0.150px;">Find All</div>
<div class="a" style="left:1252px;top:93px;width:14px;height:576px;background:#e4e4e4;"></div>
<div class="a" style="left:1252px;top:93px;width:1px;height:576px;background:#d4d4d4;"></div>
<div class="a" style="left:1266px;top:78px;width:1px;height:591px;background:#d8d8d8;"></div>
<svg class="a" style="left:1253px;top:96px;" width="13" height="12" viewBox="0 0 13 12"><path d="M1 1 L6 6 L3.8 6.3 L5.3 9.5 L4.2 10 L2.8 6.8 L1 8.5Z" fill="#222"/><text x="6.5" y="7.5" font-family="Liberation Sans" font-size="8.5" fill="#444">?</text></svg>
<div class="t" style="left:1263.8px;top:110px;font-size:8.6px;color:#333;letter-spacing:-0.419px;transform:rotate(90deg);transform-origin:0 0">Hints</div>
<svg class="a" style="left:1254px;top:147px;" width="12" height="12" viewBox="0 0 12 12"><path d="M1 3 L4 0.5 L7 3.5 L4 6Z" fill="#222"/><path d="M3 6 L8 9" stroke="#b36a30" stroke-width="1.5"/><path d="M6 7 H11 M6 9 H11 M6 11 H11" stroke="#666" stroke-width="0.8"/></svg>
<div class="t" style="left:1263.8px;top:162px;font-size:8.6px;color:#333;letter-spacing:-0.419px;transform:rotate(90deg);transform-origin:0 0">Properties</div>
<svg class="a" style="left:1254px;top:214px;" width="11" height="11" viewBox="0 0 11 11"><path d="M5.5 0.5 L10.5 3.5 L5.5 6.5 L0.5 3.5Z" fill="#fff" stroke="#222" stroke-width="0.9"/><path d="M0.5 6 L5.5 9 L10.5 6" fill="none" stroke="#222" stroke-width="0.9"/><path d="M2 5 L5.5 7 L9 5" fill="#555"/></svg>
<div class="t" style="left:1263.8px;top:229px;font-size:8.6px;color:#333;letter-spacing:-0.165px;transform:rotate(90deg);transform-origin:0 0">Objects</div>
<svg class="a" style="left:1254px;top:275px;" width="11" height="11" viewBox="0 0 11 11"><rect x="1.5" y="1.5" width="8" height="8" fill="none" stroke="#222" stroke-width="1"/><path d="M0 1.5 H3 M1.5 0 V3 M8 1.5 H11 M9.5 0 V3 M0 9.5 H3 M1.5 8 V11 M8 9.5 H11 M9.5 8 V11" stroke="#222" stroke-width="0.8"/></svg>
<div class="t" style="left:1263.8px;top:290px;font-size:8.6px;color:#333;letter-spacing:-0.427px;transform:rotate(90deg);transform-origin:0 0">Bitmap Mask</div>
<svg class="a" style="left:1254px;top:354px;" width="11" height="10" viewBox="0 0 11 10"><text x="0" y="7" font-family="Liberation Sans" font-size="7" fill="#222">A</text><circle cx="8.5" cy="3.5" r="2" fill="none" stroke="#222" stroke-width="1.2"/></svg>
<div class="t" style="left:1263.8px;top:368px;font-size:8.6px;color:#333;letter-spacing:0.057px;transform:rotate(90deg);transform-origin:0 0">Text</div>
<svg class="a" style="left:1254px;top:402px;" width="11" height="11" viewBox="0 0 11 11"><circle cx="4.5" cy="6.5" r="3.8" fill="none" stroke="#222" stroke-width="1"/><path d="M9 0 V4 M7 2 H11" stroke="#222" stroke-width="1"/></svg>
<div class="t" style="left:1263.8px;top:416px;font-size:8.6px;color:#333;letter-spacing:0.015px;transform:rotate(90deg);transform-origin:0 0">Transform</div>
<div class="t" style="left:1254px;top:470.5px;font-size:8.5px;color:#222;letter-spacing:-0.6px">XY</div>
<div class="a" style="left:1252px;top:483px;width:14px;height:90px;background:#c9c9c9;"></div>
<div class="a" style="left:1253px;top:483px;width:13px;height:14px;background:#f5f5f5;"></div>
<svg class="a" style="left:1254px;top:486px;" width="11" height="8" viewBox="0 0 11 8"><circle cx="2.8" cy="5" r="2.3" fill="none" stroke="#222" stroke-width="1.1"/><circle cx="8.2" cy="5" r="2.3" fill="none" stroke="#222" stroke-width="1.1"/><path d="M1.5 3 L3 0.5 M9.5 3 L8 0.5 M5 4 H6" stroke="#222" stroke-width="1"/></svg>
<div class="t" style="left:1263.8px;top:500px;font-size:8.6px;color:#333;letter-spacing:-0.525px;transform:rotate(90deg);transform-origin:0 0">Find and Replace</div>
<svg class="a" style="left:1254px;top:576px;" width="11" height="11" viewBox="0 0 11 11"><path d="M1 0.5 V10" stroke="#6ab0e0" stroke-width="0.8"/><rect x="3" y="1.5" width="3" height="8" fill="none" stroke="#444" stroke-width="0.9"/><rect x="6" y="5" width="4.5" height="4.5" fill="none" stroke="#444" stroke-width="0.9"/><path d="M2 10.5 H11" stroke="#444" stroke-width="0.9"/></svg>
<svg class="a" style="left:1254px;top:590px;" width="11" height="11" viewBox="0 0 11 11"><rect x="0.5" y="0.5" width="10" height="10" fill="none" stroke="#333" stroke-width="1"/><rect x="2.5" y="2.5" width="6" height="6" fill="none" stroke="#333" stroke-width="0.9"/><path d="M0.5 0.5 L2.5 2.5 M10.5 0.5 L8.5 2.5 M0.5 10.5 L2.5 8.5 M10.5 10.5 L8.5 8.5" stroke="#333" stroke-width="0.8"/></svg>
<svg class="a" style="left:1254px;top:604px;" width="11" height="11" viewBox="0 0 11 11"><rect x="0" y="0" width="11" height="11" fill="#777"/><rect x="2.5" y="2.5" width="6" height="6" fill="#ddd"/><rect x="4" y="4" width="3" height="3" fill="#777"/></svg>
<svg class="a" style="left:1254px;top:618px;" width="11" height="11" viewBox="0 0 11 11"><circle cx="5.5" cy="5.5" r="4.8" fill="#fff" stroke="#222" stroke-width="1.3"/></svg>
<svg class="a" style="left:1255px;top:632px;" width="9" height="9" viewBox="0 0 9 9"><path d="M4.5 0 V9 M0 4.5 H9" stroke="#aaa" stroke-width="1.2"/></svg>
<div class="a" style="left:1267px;top:78px;width:13px;height:591px;background:#f2f2f2;"></div>
<svg class="a" style="left:1268px;top:80px;" width="11" height="6" viewBox="0 0 11 6"><rect x="0" y="0" width="1" height="1" fill="#ccc"/><rect x="1" y="2" width="1" height="1" fill="#ccc"/><rect x="0" y="4" width="1" height="1" fill="#ccc"/><rect x="2" y="0" width="1" height="1" fill="#ccc"/><rect x="3" y="2" width="1" height="1" fill="#ccc"/><rect x="2" y="4" width="1" height="1" fill="#ccc"/><rect x="4" y="0" width="1" height="1" fill="#ccc"/><rect x="5" y="2" width="1" height="1" fill="#ccc"/><rect x="4" y="4" width="1" height="1" fill="#ccc"/><rect x="6" y="0" width="1" height="1" fill="#ccc"/><rect x="7" y="2" width="1" height="1" fill="#ccc"/><rect x="6" y="4" width="1" height="1" fill="#ccc"/><rect x="0" y="0" width="1" height="1" fill="#ccc"/><rect x="1" y="2" width="1" height="1" fill="#ccc"/><rect x="0" y="4" width="1" height="1" fill="#ccc"/><rect x="2" y="0" width="1" height="1" fill="#ccc"/><rect x="3" y="2" width="1" height="1" fill="#ccc"/><rect x="2" y="4" width="1" height="1" fill="#ccc"/></svg>
<svg class="a" style="left:1272px;top:88px;" width="4" height="7" viewBox="0 0 4 7"><path d="M0 0.5 V6.5 L3 3.5Z" fill="#444"/></svg>
<svg class="a" style="left:1270px;top:98px;" width="9" height="10" viewBox="0 0 9 10"><path d="M1 9 L5 5" stroke="#ccc" stroke-width="1.6"/><path d="M4.5 3.5 L7 1 Q8.5 1 8.5 2.5 L6 5Z" fill="#ccc"/></svg>
<svg class="a" style="left:1270px;top:113px;" width="8" height="5" viewBox="0 0 8 5"><path d="M0.8 4 L4 1 L7.2 4" fill="none" stroke="#ccc" stroke-width="1.1"/></svg>
<div class="a" style="left:1267px;top:122px;width:13px;height:11.3px;background:#fff;border:1px solid #888"></div>
<svg class="a" style="left:1268px;top:123px;" width="11" height="9.5" viewBox="0 0 11 9.5"><path d="M1 8.5 L10 1" stroke="#c04040" stroke-width="0.8"/></svg>
<div class="a" style="left:1267px;top:133.3px;width:13px;height:11.4px;background:#1d1d1b;"></div>
<div class="a" style="left:1267px;top:144.6px;width:13px;height:11.4px;background:#3c3c3b;"></div>
<div class="a" style="left:1267px;top:155.9px;width:13px;height:11.4px;background:#575756;"></div>
<div class="a" style="left:1267px;top:167.2px;width:13px;height:11.4px;background:#706f6f;"></div>
<div class="a" style="left:1267px;top:178.5px;width:13px;height:11.4px;background:#878787;"></div>
<div class="a" style="left:1267px;top:189.8px;width:13px;height:11.4px;background:#9d9d9c;"></div>
<div class="a" style="left:1267px;top:201.1px;width:13px;height:11.4px;background:#b2b2b2;"></div>
<div class="a" style="left:1267px;top:212.4px;width:13px;height:11.4px;background:#c6c6c6;"></div>
<div class="a" style="left:1267px;top:223.7px;width:13px;height:11.4px;background:#dadada;"></div>
<div class="a" style="left:1267px;top:235.0px;width:13px;height:11.4px;background:#ededed;"></div>
<div class="a" style="left:1267px;top:246.3px;width:13px;height:11.4px;background:#ffffff;"></div>
<div class="a" style="left:1267px;top:257.6px;width:13px;height:11.4px;background:#2e3192;"></div>
<div class="a" style="left:1267px;top:268.9px;width:13px;height:11.4px;background:#00a0e9;"></div>
<div class="a" style="left:1267px;top:280.2px;width:13px;height:11.4px;background:#009640;"></div>
<div class="a" style="left:1267px;top:291.5px;width:13px;height:11.4px;background:#ffed00;"></div>
<div class="a" style="left:1267px;top:302.8px;width:13px;height:11.4px;background:#e6332a;"></div>
<div class="a" style="left:1267px;top:314.1px;width:13px;height:11.4px;background:#e6007e;"></div>
<div class="a" style="left:1267px;top:325.4px;width:13px;height:11.4px;background:#a1478a;"></div>
<div class="a" style="left:1267px;top:336.7px;width:13px;height:11.4px;background:#f39200;"></div>
<div class="a" style="left:1267px;top:348.0px;width:13px;height:11.4px;background:#f9b2b0;"></div>
<div class="a" style="left:1267px;top:359.3px;width:13px;height:11.4px;background:#7d6b5f;"></div>
<div class="a" style="left:1267px;top:370.6px;width:13px;height:11.4px;background:#c9c6e4;"></div>
<div class="a" style="left:1267px;top:381.9px;width:13px;height:11.4px;background:#9f98c9;"></div>
<div class="a" style="left:1267px;top:393.2px;width:13px;height:11.4px;background:#5b87c5;"></div>
<div class="a" style="left:1267px;top:404.5px;width:13px;height:11.4px;background:#6a66ad;"></div>
<div class="a" style="left:1267px;top:415.8px;width:13px;height:11.4px;background:#7f7aa6;"></div>
<div class="a" style="left:1267px;top:427.1px;width:13px;height:11.4px;background:#40589a;"></div>
<div class="a" style="left:1267px;top:438.4px;width:13px;height:11.4px;background:#4b4a72;"></div>
<div class="a" style="left:1267px;top:449.7px;width:13px;height:11.4px;background:#55799e;"></div>
<div class="a" style="left:1267px;top:461.0px;width:13px;height:11.4px;background:#1b96d3;"></div>
<div class="a" style="left:1267px;top:472.3px;width:13px;height:11.4px;background:#8ed0f0;"></div>
<div class="a" style="left:1267px;top:483.6px;width:13px;height:11.4px;background:#a3c0d6;"></div>
<div class="a" style="left:1267px;top:494.9px;width:13px;height:11.4px;background:#8ea5b8;"></div>
<div class="a" style="left:1267px;top:506.2px;width:13px;height:11.4px;background:#6a8599;"></div>
<div class="a" style="left:1267px;top:517.5px;width:13px;height:11.4px;background:#3c4d5a;"></div>
<div class="a" style="left:1267px;top:528.8px;width:13px;height:11.4px;background:#3d6a6e;"></div>
<div class="a" style="left:1267px;top:540.1px;width:13px;height:11.4px;background:#2c8b83;"></div>
<div class="a" style="left:1267px;top:551.4px;width:13px;height:11.4px;background:#5f9590;"></div>
<div class="a" style="left:1267px;top:562.7px;width:13px;height:11.4px;background:#3ba291;"></div>
<div class="a" style="left:1267px;top:574.0px;width:13px;height:11.4px;background:#46a17a;"></div>
<div class="a" style="left:1267px;top:585.3px;width:13px;height:11.4px;background:#45b8d6;"></div>
<div class="a" style="left:1267px;top:596.6px;width:13px;height:11.4px;background:#339fbb;"></div>
<div class="a" style="left:1267px;top:607.9px;width:13px;height:11.4px;background:#a8bcb2;"></div>
<div class="a" style="left:1267px;top:619.2px;width:13px;height:11.4px;background:#c6e0cf;"></div>
<div class="a" style="left:1267px;top:630.5px;width:13px;height:11.4px;background:#86c7a0;"></div>
<svg class="a" style="left:1270px;top:643px;" width="8" height="5" viewBox="0 0 8 5"><path d="M0.8 1 L4 4 L7.2 1" fill="none" stroke="#bbb" stroke-width="1.1"/></svg>
<svg class="a" style="left:1270px;top:654px;" width="8" height="6" viewBox="0 0 8 6"><path d="M0.5 0.5 L3 3 L0.5 5.5 M4.5 0.5 L7 3 L4.5 5.5" fill="none" stroke="#bbb" stroke-width="1"/></svg>
<div class="a" style="left:571px;top:13px;width:234px;height:15.5px;background:#24292e;"></div>
<svg class="a" style="left:577px;top:17px;" width="9" height="8" viewBox="0 0 9 8"><path d="M0 1 H8 M0 4 H8 M0 7 H8" stroke="#c8c8c8" stroke-width="1"/></svg>
<svg class="a" style="left:591px;top:16px;" width="10" height="10" viewBox="0 0 10 10"><rect x="0.5" y="3.5" width="6" height="6" fill="none" stroke="#c8c8c8"/><rect x="3.5" y="0.5" width="6" height="6" fill="none" stroke="#c8c8c8"/></svg>
<svg class="a" style="left:604px;top:16px;" width="12" height="10" viewBox="0 0 12 10"><path d="M2 0.5 V9 M0.5 3 H3.5" stroke="#c8c8c8"/><circle cx="8" cy="5" r="2.8" fill="none" stroke="#c8c8c8"/><path d="M10 7 L11.5 8.5" stroke="#c8c8c8"/></svg>
<svg class="a" style="left:620px;top:16px;" width="11" height="10" viewBox="0 0 11 10"><path d="M2 0.5 V9 M0.5 7 L2 9 L3.5 7 M6 9.5 H10.5 V4" fill="none" stroke="#c8c8c8"/></svg>
<div class="t" style="left:637px;top:17.82px;font-size:8.6px;color:#bdbdbd;letter-spacing:-0.442px;">Recording [00:01:07]</div>
<svg class="a" style="left:717px;top:17px;" width="6" height="8" viewBox="0 0 6 8"><rect x="0" y="0" width="2" height="8" fill="#e03b3b"/><rect x="3.5" y="0" width="2" height="8" fill="#e03b3b"/></svg>
<div class="a" style="left:735px;top:16.5px;width:8px;height:8.5px;background:#e8282a;"></div>
<svg class="a" style="left:753px;top:16px;" width="12" height="10" viewBox="0 0 12 10"><path d="M0.5 2.5 H3 L4 0.5 H8 L9 2.5 H11.5 V9.5 H0.5Z" fill="#e8e8e8"/><circle cx="6" cy="5.8" r="2.3" fill="#24292e"/><circle cx="6" cy="5.8" r="1.3" fill="#e8e8e8"/></svg>
<div class="a" style="left:768px;top:17px;width:1px;height:8px;background:#555;"></div>
<svg class="a" style="left:775px;top:16px;" width="10" height="10" viewBox="0 0 10 10"><path d="M1 9 L1.5 6.5 L7 1 L9 3 L3.5 8.5Z" fill="#e8e8e8"/></svg>
<div class="a" style="left:788px;top:17px;width:1px;height:8px;background:#555;"></div>
<svg class="a" style="left:793px;top:17px;" width="8" height="8" viewBox="0 0 8 8"><path d="M0.5 0.5 L7.5 7.5 M7.5 0.5 L0.5 7.5" stroke="#d0d0d0" stroke-width="1.1"/></svg>
<div class="t" style="left:540px;top:6.3px;font-size:16.6px;font-weight:bold;color:#fff;letter-spacing:0px;-webkit-text-stroke:2.4px #505050;paint-order:stroke fill;transform:scaleX(1.14);transform-origin:0 0">www.BANDICAM.com</div>
</body></html>
